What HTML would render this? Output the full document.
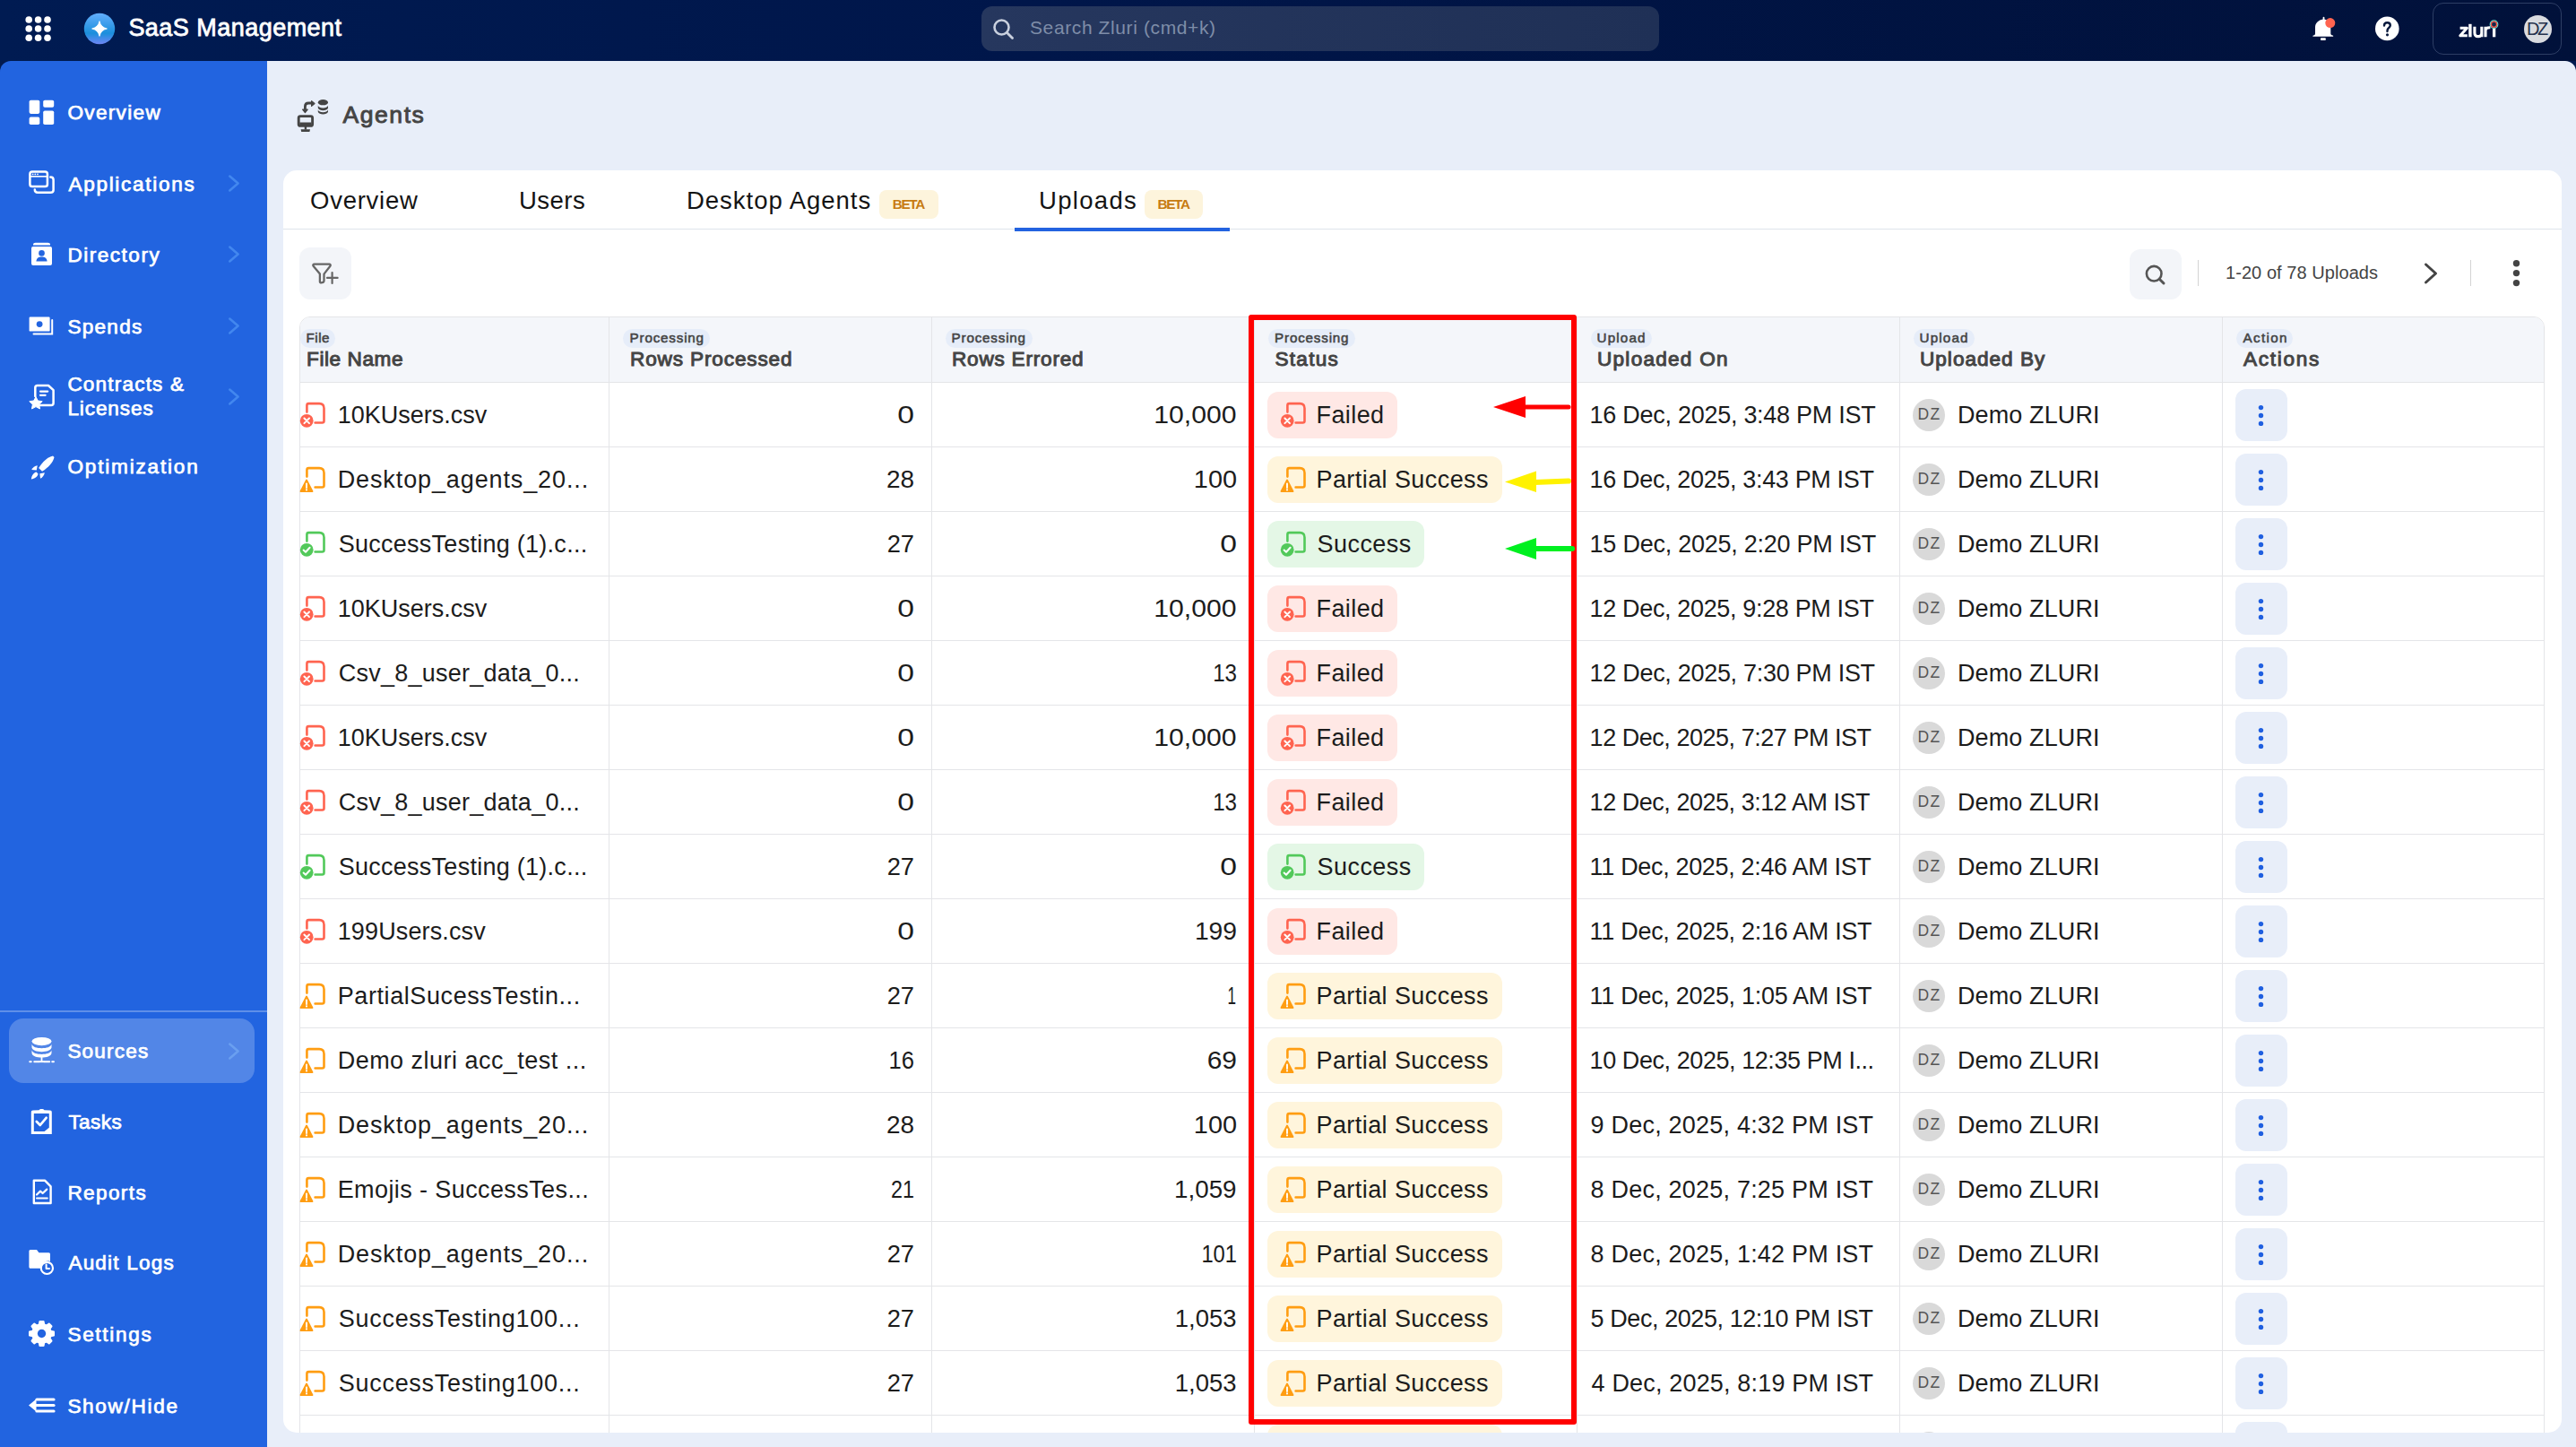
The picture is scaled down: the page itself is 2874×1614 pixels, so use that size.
<!DOCTYPE html><html><head><meta charset="utf-8"><style>
html,body{margin:0;padding:0;}
body{width:2874px;height:1614px;overflow:hidden;position:relative;background:#021a4f;font-family:"Liberation Sans", sans-serif;}
.t{position:absolute;white-space:nowrap;}
.r{position:absolute;}
</style></head><body>
<div class="r" style="left:0px;top:0px;width:2874px;height:68px;background:linear-gradient(90deg,#001b52 0%,#00164a 40%,#01113a 100%);border-radius:0px;"></div>
<svg class="r" style="left:0px;top:0px" width="70" height="68" viewBox="0 0 70 68"><circle cx="32.2" cy="22" r="3.8" fill="#fff"/><circle cx="32.2" cy="32" r="3.8" fill="#fff"/><circle cx="32.2" cy="42.3" r="3.8" fill="#fff"/><circle cx="42.6" cy="22" r="3.8" fill="#fff"/><circle cx="42.6" cy="32" r="3.8" fill="#fff"/><circle cx="42.6" cy="42.3" r="3.8" fill="#fff"/><circle cx="53" cy="22" r="3.8" fill="#fff"/><circle cx="53" cy="32" r="3.8" fill="#fff"/><circle cx="53" cy="42.3" r="3.8" fill="#fff"/></svg>
<svg class="r" style="left:90px;top:11px" width="42" height="42" viewBox="0 0 42 42"><defs><linearGradient id="lg" x1="0" y1="0" x2="0" y2="1"><stop offset="0" stop-color="#63aefc"/><stop offset="0.65" stop-color="#1b8fdc"/><stop offset="1" stop-color="#6d86f5"/></linearGradient></defs><circle cx="21" cy="21" r="17.2" fill="url(#lg)"/><path d="M21 12.6 Q22.5 19.5 29.4 21 Q22.5 22.5 21 29.4 Q19.5 22.5 12.6 21 Q19.5 19.5 21 12.6Z" fill="#fff" stroke="#fff" stroke-width="0.8" stroke-linejoin="round"/></svg>
<div class="t" style="left:143.40px;top:18.12px;font-size:27px;line-height:27px;color:#ffffff;font-weight:400;letter-spacing:0.468px;-webkit-text-stroke:0.8px #fff;">SaaS Management</div>
<div class="r" style="left:1095px;top:7px;width:756px;height:50px;background:linear-gradient(90deg,#26375e,#1f3056);border-radius:12px;"></div>
<svg class="r" style="left:1104px;top:17px" width="32" height="32" viewBox="0 0 32 32"><circle cx="13.5" cy="13.5" r="8" fill="none" stroke="#c9d0de" stroke-width="2.6"/><line x1="19.5" y1="19.5" x2="25.5" y2="25.5" stroke="#c9d0de" stroke-width="2.8" stroke-linecap="round"/></svg>
<div class="t" style="left:1149.00px;top:19.67px;font-size:21px;line-height:21px;color:#7e8da8;font-weight:400;letter-spacing:0.607px;">Search Zluri (cmd+k)</div>
<svg class="r" style="left:2574px;top:14px" width="40" height="36" viewBox="0 0 40 36"><path d="M17.6 5.6 C17.6 4.4 19.4 4.4 19.4 5.6 L19.4 7.4 C23.6 8.2 26.3 11.6 26.3 16.2 L26.3 23.6 C26.3 24.8 27.6 25.4 28.6 25.6 C29.4 25.8 29.6 26.8 28.8 26.8 L6.8 26.8 C6 26.8 6.2 25.8 7 25.6 C8 25.4 9 24.8 9 23.6 L9 16.2 C9 11.6 12.8 8.2 17.6 7.4Z" fill="#fff"/><rect x="15" y="28.2" width="5.8" height="2.8" rx="0.8" fill="#fff"/><circle cx="25.8" cy="11.6" r="5.5" fill="#ff6450"/></svg>
<svg class="r" style="left:2648px;top:17px" width="32" height="32" viewBox="0 0 32 32"><circle cx="15.3" cy="14.9" r="13.3" fill="#fff"/><path d="M12 11.6 C12 9.4 13.5 8.2 15.4 8.2 C17.4 8.2 18.8 9.5 18.8 11.3 C18.8 13.4 16.2 14 15.6 16.4 L15.5 18" fill="none" stroke="#0a1a3e" stroke-width="2.4" stroke-linecap="round"/><circle cx="15.5" cy="21.8" r="1.6" fill="#0a1a3e"/></svg>
<div class="r" style="left:2714px;top:3px;width:144px;height:58px;background:transparent;border-radius:12px;box-sizing:border-box;border:1.3px solid rgba(160,175,210,0.28);"></div>
<svg class="r" style="left:2740px;top:20px" width="50" height="26" viewBox="0 0 50 26"><path d="M4.6 11.2 L12.4 11.2 L4.8 19.8 L12.8 19.8" fill="none" stroke="#fff" stroke-width="3" stroke-linejoin="round"/><line x1="15.9" y1="6.8" x2="15.9" y2="21.3" stroke="#fff" stroke-width="3.4"/><path d="M20.9 9.7 L20.9 16.4 C20.9 19.4 22.4 20.6 24.8 20.6 C27.2 20.6 28.8 19.4 28.8 16.4 L28.8 9.7 M28.8 15.8 L28.8 21.3" fill="none" stroke="#fff" stroke-width="3.1"/><path d="M33 21.3 L33 9.7 M33 14.6 C33 11.8 34.8 10.6 38.4 10.8" fill="none" stroke="#fff" stroke-width="3.1"/><line x1="42.6" y1="11.4" x2="42.6" y2="21.3" stroke="#fff" stroke-width="3.3"/><circle cx="42.5" cy="7.2" r="4.3" fill="none" stroke="#5fe0d0" stroke-width="1.2"/><circle cx="42.5" cy="7.2" r="3.1" fill="#14294d" stroke="#ff5a4a" stroke-width="1.3"/></svg>
<div class="r" style="left:2816px;top:16.5px;width:31px;height:31px;border-radius:50%;background:#d9dbe0;"></div>
<div class="t" style="left:2819.00px;top:21.83px;font-size:20px;line-height:20px;color:#26324d;font-weight:400;letter-spacing:-2.443px;">DZ</div>
<div class="r" style="left:0px;top:68px;width:298px;height:1546px;background:#2264e0;border-radius:0px;border-top-left-radius:12px;"></div>
<div class="r" style="left:298px;top:68px;width:2576px;height:1546px;background:#e8eef9;border-radius:0px;border-top-right-radius:12px;"></div>
<svg class="r" style="left:31px;top:110.5px" width="32" height="32" viewBox="0 0 32 32"><rect x="1.6" y="0.7" width="11.7" height="15.2" rx="1.8" fill="#fff"/><rect x="17.2" y="0.7" width="12" height="8" rx="1.8" fill="#fff"/><rect x="1.6" y="19.6" width="11.7" height="8.4" rx="1.8" fill="#fff"/><rect x="17.2" y="12.5" width="12" height="15.5" rx="1.8" fill="#fff"/></svg>
<div class="t" style="left:75.40px;top:114.61px;font-size:22.6px;line-height:22.6px;color:#ffffff;font-weight:400;letter-spacing:1.308px;-webkit-text-stroke:0.75px #fff;">Overview</div>
<svg class="r" style="left:31px;top:190px" width="32" height="32" viewBox="0 0 32 32"><rect x="2.4" y="1.6" width="19.5" height="16.5" rx="2.6" fill="none" stroke="#fff" stroke-width="2.5"/><line x1="2.4" y1="6.8" x2="21.9" y2="6.8" stroke="#fff" stroke-width="1.6"/><circle cx="5.6" cy="4.3" r="0.9" fill="#fff"/><circle cx="8.3" cy="4.3" r="0.9" fill="#fff"/><circle cx="11" cy="4.3" r="0.9" fill="#fff"/><path d="M25.3 7.6 C27.5 7.6 28.6 8.8 28.6 10.6 L28.6 22 C28.6 24 27.4 24.8 25.4 24.8 L11 24.8 C9 24.8 7.8 23.8 7.8 21.6" fill="none" stroke="#fff" stroke-width="2.5" stroke-linecap="round"/></svg>
<div class="t" style="left:76.40px;top:194.61px;font-size:22.6px;line-height:22.6px;color:#ffffff;font-weight:400;letter-spacing:1.679px;-webkit-text-stroke:0.75px #fff;">Applications</div>
<svg class="r" style="left:253px;top:192px" width="16" height="24" viewBox="0 0 16 24"><path d="M3.3 4.6 L12.6 12.6 L3.3 20.4" fill="none" stroke="#4287ef" stroke-width="2.6" stroke-linecap="round" stroke-linejoin="round"/></svg>
<svg class="r" style="left:31px;top:269px" width="32" height="32" viewBox="0 0 32 32"><path d="M6 4.2 C6 2.6 7 1.8 8.6 1.8 L22.5 1.8 C24.2 1.8 25 2.6 25 4 L25 4.6 L6 4.6Z" fill="#fff"/><rect x="4" y="6" width="23" height="21" rx="2" fill="#fff"/><circle cx="15.5" cy="13.4" r="3.3" fill="#2264e0"/><path d="M9.4 22.5 C9.8 18.8 12.3 17.6 15.5 17.6 C18.7 17.6 21.2 18.8 21.6 22.5Z" fill="#2264e0"/></svg>
<div class="t" style="left:75.40px;top:273.61px;font-size:22.6px;line-height:22.6px;color:#ffffff;font-weight:400;letter-spacing:1.489px;-webkit-text-stroke:0.75px #fff;">Directory</div>
<svg class="r" style="left:253px;top:271px" width="16" height="24" viewBox="0 0 16 24"><path d="M3.3 4.6 L12.6 12.6 L3.3 20.4" fill="none" stroke="#4287ef" stroke-width="2.6" stroke-linecap="round" stroke-linejoin="round"/></svg>
<svg class="r" style="left:31px;top:352px" width="32" height="32" viewBox="0 0 32 32"><rect x="1.6" y="1.6" width="23" height="16" rx="1.2" fill="#fff"/><circle cx="13.1" cy="9.6" r="3.4" fill="#2264e0"/><path d="M27.2 5 L27.2 20.4 L6.5 20.4" fill="none" stroke="#fff" stroke-width="2" stroke-linecap="round"/></svg>
<div class="t" style="left:75.40px;top:353.61px;font-size:22.6px;line-height:22.6px;color:#ffffff;font-weight:400;letter-spacing:1.254px;-webkit-text-stroke:0.75px #fff;">Spends</div>
<svg class="r" style="left:253px;top:351px" width="16" height="24" viewBox="0 0 16 24"><path d="M3.3 4.6 L12.6 12.6 L3.3 20.4" fill="none" stroke="#4287ef" stroke-width="2.6" stroke-linecap="round" stroke-linejoin="round"/></svg>
<svg class="r" style="left:31px;top:506px" width="32" height="32" viewBox="0 0 32 32"><path d="M28 2.5 C22 4 16.5 9 12.2 16 L16 19.8 C23 15.5 28 10 29.5 4Z" fill="#fff"/><path d="M10.8 13.2 C8 13.5 5.5 15.5 4.2 18 L9.8 18.6Z" fill="#fff"/><path d="M18.8 21.2 C18.5 24 16.5 26.5 14 27.8 L13.4 22.2Z" fill="#fff"/><path d="M9.6 20.5 C6.5 21 4.4 24.5 3.8 28.4 C7.6 27.8 11 25.6 11.5 22.4Z" fill="#fff"/></svg>
<div class="t" style="left:75.40px;top:509.61px;font-size:22.6px;line-height:22.6px;color:#ffffff;font-weight:400;letter-spacing:1.800px;-webkit-text-stroke:0.75px #fff;">Optimization</div>
<svg class="r" style="left:31px;top:428px" width="32" height="32" viewBox="0 0 32 32"><path d="M8.3 14 L8.3 4.5 C8.3 3 9.2 2 10.8 2 L23 2 L28.6 7.2 L28.6 21.5 C28.6 23 27.6 24 26.2 24 L13 24" fill="none" stroke="#fff" stroke-width="2.5" stroke-linejoin="round" stroke-linecap="round"/><line x1="14" y1="8.6" x2="22.2" y2="8.6" stroke="#fff" stroke-width="2.2" stroke-linecap="round"/><line x1="14" y1="12.8" x2="19.6" y2="12.8" stroke="#fff" stroke-width="2.2" stroke-linecap="round"/><path d="M9 14.6 L11.3 19 L16.2 19.7 L12.6 23.1 L13.5 28 L9 25.6 L4.5 28 L5.4 23.1 L1.8 19.7 L6.7 19Z" fill="#fff" stroke="#fff" stroke-width="1" stroke-linejoin="round"/></svg>
<div class="t" style="left:75.40px;top:418.01px;font-size:22.6px;line-height:22.6px;color:#ffffff;font-weight:400;letter-spacing:1.164px;-webkit-text-stroke:0.75px #fff;">Contracts &amp;</div>
<div class="t" style="left:75.40px;top:444.81px;font-size:22.6px;line-height:22.6px;color:#ffffff;font-weight:400;letter-spacing:0.875px;-webkit-text-stroke:0.75px #fff;">Licenses</div>
<svg class="r" style="left:253px;top:430px" width="16" height="24" viewBox="0 0 16 24"><path d="M3.3 4.6 L12.6 12.6 L3.3 20.4" fill="none" stroke="#4287ef" stroke-width="2.6" stroke-linecap="round" stroke-linejoin="round"/></svg>
<div class="r" style="left:0px;top:1127px;width:298px;height:1.5px;background:rgba(255,255,255,0.28);border-radius:0px;"></div>
<div class="r" style="left:10px;top:1136px;width:274px;height:72px;background:rgba(255,255,255,0.22);border-radius:16px;"></div>
<svg class="r" style="left:31px;top:1156px" width="32" height="32" viewBox="0 0 32 32"><ellipse cx="15.5" cy="5.6" rx="11" ry="4.6" fill="#fff"/><path d="M4.5 8.8 C5.5 12 10 13.2 15.5 13.2 C21 13.2 25.5 12 26.5 8.8 L26.5 12.6 C25.8 15.8 21 17.2 15.5 17.2 C10 17.2 5.2 15.8 4.5 12.6Z" fill="#fff"/><path d="M4.5 15.6 C5.5 18.8 10 20 15.5 20 C21 20 25.5 18.8 26.5 15.6 L26.5 18.8 C25.8 22.2 21 23.6 15.5 23.6 C10 23.6 5.2 22.2 4.5 18.8Z" fill="#fff"/><line x1="15.5" y1="23" x2="15.5" y2="28" stroke="#fff" stroke-width="1.8"/><path d="M2.2 28.2 L3.8 28.2 M7.2 28.2 L12.6 28.2 M18.4 28.2 L24.2 28.2 M27.2 28.2 L29 28.2" stroke="#fff" stroke-width="1.9" stroke-linecap="round"/><line x1="12.6" y1="28.2" x2="18.4" y2="28.2" stroke="#fff" stroke-width="1.9"/></svg>
<div class="t" style="left:75.40px;top:1161.61px;font-size:22.6px;line-height:22.6px;color:#ffffff;font-weight:400;letter-spacing:1.152px;-webkit-text-stroke:0.75px #fff;">Sources</div>
<svg class="r" style="left:31px;top:1236px" width="32" height="32" viewBox="0 0 32 32"><path d="M12.6 2.2 C13 0.6 18 0.6 18.4 2.2 L24.8 2.6 C26.2 2.6 26.8 3.4 26.8 4.8 L26.8 29 L3.8 29 L3.8 4.8 C3.8 3.4 4.4 2.6 5.8 2.6Z" fill="#fff"/><path d="M6.8 6 L23.8 6 L23.8 21.8 L18.6 26 L6.8 26Z" fill="#2264e0"/><path d="M9.8 15 L13.8 19 L20.6 10.8" fill="none" stroke="#fff" stroke-width="2.7" stroke-linecap="round" stroke-linejoin="round"/></svg>
<div class="t" style="left:76.40px;top:1240.61px;font-size:22.6px;line-height:22.6px;color:#ffffff;font-weight:400;letter-spacing:0.386px;-webkit-text-stroke:0.75px #fff;">Tasks</div>
<svg class="r" style="left:31px;top:1315px" width="32" height="32" viewBox="0 0 32 32"><path d="M6.8 1.8 L19.2 1.8 L25.6 8.4 L25.6 27 L6.8 27Z" fill="none" stroke="#fff" stroke-width="2.4" stroke-linejoin="round"/><path d="M10 17.5 L14 13.6 L16.6 16 L21.2 11.6" fill="none" stroke="#fff" stroke-width="2.2" stroke-linecap="round" stroke-linejoin="round"/><line x1="10" y1="21.6" x2="21.8" y2="21.6" stroke="#fff" stroke-width="2" stroke-linecap="round"/></svg>
<div class="t" style="left:75.40px;top:1319.61px;font-size:22.6px;line-height:22.6px;color:#ffffff;font-weight:400;letter-spacing:1.364px;-webkit-text-stroke:0.75px #fff;">Reports</div>
<svg class="r" style="left:31px;top:1393px" width="32" height="32" viewBox="0 0 32 32"><path d="M1.4 2.8 C1.4 1.8 2 1 3 1 L10 1 L12.4 4.3 L23.4 4.3 C24.4 4.3 25 5 25 6 L25 14 C20 12.5 15.5 15.5 15.3 21.8 L3 21.8 C2 21.8 1.4 21 1.4 20Z" fill="#fff"/><circle cx="21.4" cy="21.4" r="6.6" fill="none" stroke="#fff" stroke-width="2.2"/><path d="M20.6 17.6 L20.6 22 L24 22" fill="none" stroke="#fff" stroke-width="2" stroke-linecap="round" stroke-linejoin="round"/></svg>
<div class="t" style="left:76.40px;top:1397.61px;font-size:22.6px;line-height:22.6px;color:#ffffff;font-weight:400;letter-spacing:1.170px;-webkit-text-stroke:0.75px #fff;">Audit Logs</div>
<svg class="r" style="left:31px;top:1472px" width="32" height="32" viewBox="0 0 32 32"><g transform="translate(15.5 15.5) scale(0.93) translate(-15.5 -15.5)"><path d="M13.3 1 L17.7 1 L18.4 4.6 L21.3 5.8 L24.3 3.7 L27.3 6.7 L25.2 9.7 L26.4 12.6 L30 13.3 L30 17.7 L26.4 18.4 L25.2 21.3 L27.3 24.3 L24.3 27.3 L21.3 25.2 L18.4 26.4 L17.7 30 L13.3 30 L12.6 26.4 L9.7 25.2 L6.7 27.3 L3.7 24.3 L5.8 21.3 L4.6 18.4 L1 17.7 L1 13.3 L4.6 12.6 L5.8 9.7 L3.7 6.7 L6.7 3.7 L9.7 5.8 L12.6 4.6Z" fill="#fff" stroke="#fff" stroke-width="2.2" stroke-linejoin="round"/><circle cx="15.5" cy="15.5" r="5" fill="#2264e0"/></g></svg>
<div class="t" style="left:75.40px;top:1477.61px;font-size:22.6px;line-height:22.6px;color:#ffffff;font-weight:400;letter-spacing:1.666px;-webkit-text-stroke:0.75px #fff;">Settings</div>
<svg class="r" style="left:31px;top:1552px" width="32" height="32" viewBox="0 0 32 32"><path d="M1 15.5 L9.5 8.5 L9.5 22.5Z" fill="#fff"/><line x1="10" y1="9" x2="29" y2="9" stroke="#fff" stroke-width="3.2" stroke-linecap="round"/><line x1="8" y1="15.5" x2="29" y2="15.5" stroke="#fff" stroke-width="3.2" stroke-linecap="round"/><line x1="10" y1="22" x2="29" y2="22" stroke="#fff" stroke-width="3.2" stroke-linecap="round"/></svg>
<div class="t" style="left:75.40px;top:1557.61px;font-size:22.6px;line-height:22.6px;color:#ffffff;font-weight:400;letter-spacing:1.663px;-webkit-text-stroke:0.75px #fff;">Show/Hide</div>
<svg class="r" style="left:253px;top:1160px" width="16" height="24" viewBox="0 0 16 24"><path d="M3.3 4.6 L12.6 12.6 L3.3 20.4" fill="none" stroke="#6a9ff0" stroke-width="2.6" stroke-linecap="round" stroke-linejoin="round"/></svg>
<svg class="r" style="left:320px;top:100px" width="60" height="60" viewBox="0 0 60 60"><rect x="13.2" y="29.6" width="15.4" height="10.8" rx="2" fill="none" stroke="#444" stroke-width="2.9"/><path d="M14.3 38 L27.5 38" stroke="#444" stroke-width="3"/><line x1="20.9" y1="41" x2="20.9" y2="44.6" stroke="#444" stroke-width="2.4"/><path d="M15.6 44.2 L26 44.2 L25.4 46.9 L16.2 46.9Z" fill="#444"/><ellipse cx="40.4" cy="14.2" rx="5.6" ry="3.1" fill="#444"/><path d="M34.8 17.8 C35.5 19.6 37.8 20.4 40.4 20.4 C43 20.4 45.3 19.6 46 17.8 L46 20.4 C45.3 22.2 43 23.2 40.4 23.2 C37.8 23.2 35.5 22.2 34.8 20.4Z" fill="#444"/><path d="M34.8 22.6 C35.5 24.4 37.8 25.2 40.4 25.2 C43 25.2 45.3 24.4 46 22.6 L46 24.8 C45.3 26.6 43 27.6 40.4 27.6 C37.8 27.6 35.5 26.6 34.8 24.8Z" fill="#444"/><path d="M20.4 22.5 L20.4 18.8 C20.4 16.4 22 15 24.2 15 L28.6 15" fill="none" stroke="#444" stroke-width="2.8"/><path d="M27.6 12.6 L31 15.5 L27.6 18.4Z" fill="#444" stroke="#444" stroke-width="1.2" stroke-linejoin="round"/><path d="M17.6 22.2 L23.2 22.2 L20.4 25.6Z" fill="#444" stroke="#444" stroke-width="1.2" stroke-linejoin="round"/></svg>
<div class="t" style="left:382.40px;top:114.98px;font-size:26.6px;line-height:26.6px;color:#444444;font-weight:400;letter-spacing:1.541px;-webkit-text-stroke:0.9px #444;">Agents</div>
<div class="r" style="left:316px;top:190px;width:2542px;height:1408px;background:#ffffff;border-radius:15px;"></div>
<div class="t" style="left:346.00px;top:209.64px;font-size:27.5px;line-height:27.5px;color:#141414;font-weight:400;letter-spacing:0.751px;">Overview</div>
<div class="t" style="left:579.00px;top:209.64px;font-size:27.5px;line-height:27.5px;color:#141414;font-weight:400;letter-spacing:0.485px;">Users</div>
<div class="t" style="left:766.00px;top:209.64px;font-size:27.5px;line-height:27.5px;color:#141414;font-weight:400;letter-spacing:0.970px;">Desktop Agents</div>
<div class="r" style="left:981px;top:212px;width:66px;height:32px;background:#fdf4dc;border-radius:8px;"></div>
<div class="t" style="left:995.70px;top:219.97px;font-size:15.3px;line-height:15.3px;color:#c77b12;font-weight:700;letter-spacing:-1.319px;">BETA</div>
<div class="t" style="left:1159.00px;top:209.64px;font-size:27.5px;line-height:27.5px;color:#141414;font-weight:400;letter-spacing:1.309px;">Uploads</div>
<div class="r" style="left:1277px;top:212px;width:65px;height:32px;background:#fdf4dc;border-radius:8px;"></div>
<div class="t" style="left:1291.50px;top:219.97px;font-size:15.3px;line-height:15.3px;color:#c77b12;font-weight:700;letter-spacing:-1.319px;">BETA</div>
<div class="r" style="left:316px;top:255px;width:2542px;height:1px;background:#dfe4eb;border-radius:0px;"></div>
<div class="r" style="left:1132px;top:254px;width:240px;height:4px;background:#2363e0;border-radius:0px;"></div>
<div class="r" style="left:334px;top:276px;width:58px;height:58px;background:#f3f5f9;border-radius:12px;"></div>
<svg class="r" style="left:334px;top:276px" width="58" height="58" viewBox="0 0 58 58"><path d="M16.8 18.6 L33.2 18.6 C34.6 18.6 35.2 19.7 34.4 20.7 L27.5 29.6 L27.5 37 C27.5 38.4 26.6 39 25.4 39.2 L24.4 39.4 C23.6 39.6 22.9 39 22.9 38.2 L22.9 29.6 L15.6 20.7 C14.8 19.7 15.4 18.6 16.8 18.6Z" fill="none" stroke="#666" stroke-width="2.3" stroke-linejoin="round"/><line x1="36.6" y1="28" x2="36.6" y2="40" stroke="#666" stroke-width="2.2" stroke-linecap="round"/><line x1="31" y1="33.9" x2="42.6" y2="33.9" stroke="#666" stroke-width="2.2" stroke-linecap="round"/></svg>
<div class="r" style="left:2376px;top:278px;width:58px;height:56px;background:#f3f5f9;border-radius:12px;"></div>
<svg class="r" style="left:2376px;top:278px" width="58" height="56" viewBox="0 0 58 56"><circle cx="27.2" cy="27.2" r="8.3" fill="none" stroke="#555" stroke-width="2.6"/><line x1="33.2" y1="33.2" x2="38" y2="38" stroke="#555" stroke-width="3" stroke-linecap="round"/></svg>
<div class="r" style="left:2452px;top:290px;width:1.3px;height:29px;background:#d3d3d3;border-radius:0px;"></div>
<div class="t" style="left:2483.00px;top:294.33px;font-size:20px;line-height:20px;color:#444444;font-weight:400;letter-spacing:0.059px;">1-20 of 78 Uploads</div>
<svg class="r" style="left:2700px;top:290px" width="26" height="30" viewBox="0 0 26 30"><path d="M6.5 5 L17.5 15 L6.5 25" fill="none" stroke="#444" stroke-width="3" stroke-linecap="round" stroke-linejoin="round"/></svg>
<div class="r" style="left:2756px;top:290px;width:1.3px;height:29px;background:#d3d3d3;border-radius:0px;"></div>
<svg class="r" style="left:2798px;top:286px" width="20" height="38" viewBox="0 0 20 38"><circle cx="9.5" cy="7.8" r="3.7" fill="#444"/><circle cx="9.5" cy="18.6" r="3.7" fill="#444"/><circle cx="9.5" cy="29.6" r="3.7" fill="#444"/></svg>
<div class="r" style="left:334px;top:353px;width:2505px;height:1245px;overflow:hidden;">
<div class="r" style="left:0;top:0;width:2505px;height:1400px;box-sizing:border-box;border:1px solid #e4e5e8;border-radius:12px;background:#fff;"></div>
<div class="r" style="left:1px;top:1px;width:2503px;height:72px;background:#f4f6fa;border-radius:11px 11px 0 0;"></div>
<div class="r" style="left:345px;top:0;width:1px;height:1400px;background:#e4e5e8;"></div>
<div class="r" style="left:705px;top:0;width:1px;height:1400px;background:#e4e5e8;"></div>
<div class="r" style="left:1065px;top:0;width:1px;height:1400px;background:#e4e5e8;"></div>
<div class="r" style="left:1425px;top:0;width:1px;height:1400px;background:#e4e5e8;"></div>
<div class="r" style="left:1785px;top:0;width:1px;height:1400px;background:#e4e5e8;"></div>
<div class="r" style="left:2145px;top:0;width:1px;height:1400px;background:#e4e5e8;"></div>
<div class="r" style="left:0;top:73px;width:2505px;height:1px;background:#e4e5e8;"></div>
<div class="r" style="left:0;top:145px;width:2505px;height:1px;background:#e4e5e8;"></div>
<div class="r" style="left:0;top:217px;width:2505px;height:1px;background:#e4e5e8;"></div>
<div class="r" style="left:0;top:289px;width:2505px;height:1px;background:#e4e5e8;"></div>
<div class="r" style="left:0;top:361px;width:2505px;height:1px;background:#e4e5e8;"></div>
<div class="r" style="left:0;top:433px;width:2505px;height:1px;background:#e4e5e8;"></div>
<div class="r" style="left:0;top:505px;width:2505px;height:1px;background:#e4e5e8;"></div>
<div class="r" style="left:0;top:577px;width:2505px;height:1px;background:#e4e5e8;"></div>
<div class="r" style="left:0;top:649px;width:2505px;height:1px;background:#e4e5e8;"></div>
<div class="r" style="left:0;top:721px;width:2505px;height:1px;background:#e4e5e8;"></div>
<div class="r" style="left:0;top:793px;width:2505px;height:1px;background:#e4e5e8;"></div>
<div class="r" style="left:0;top:865px;width:2505px;height:1px;background:#e4e5e8;"></div>
<div class="r" style="left:0;top:937px;width:2505px;height:1px;background:#e4e5e8;"></div>
<div class="r" style="left:0;top:1009px;width:2505px;height:1px;background:#e4e5e8;"></div>
<div class="r" style="left:0;top:1081px;width:2505px;height:1px;background:#e4e5e8;"></div>
<div class="r" style="left:0;top:1153px;width:2505px;height:1px;background:#e4e5e8;"></div>
<div class="r" style="left:0;top:1225px;width:2505px;height:1px;background:#e4e5e8;"></div>
<div class="r" style="left:0;top:1297px;width:2505px;height:1px;background:#e4e5e8;"></div>
</div>
<div class="r" style="left:335px;top:367px;width:38.5px;height:21px;background:#e6edf9;border-radius:10.5px;"></div>
<div class="t" style="left:341.60px;top:368.69px;font-size:15.2px;line-height:15.2px;color:#444444;font-weight:400;letter-spacing:0.492px;-webkit-text-stroke:0.55px #444;">File</div>
<div class="t" style="left:342.00px;top:390.01px;font-size:22.6px;line-height:22.6px;color:#444444;font-weight:400;letter-spacing:0.577px;-webkit-text-stroke:1px #444;">File Name</div>
<div class="r" style="left:695px;top:367px;width:97px;height:21px;background:#e6edf9;border-radius:10.5px;"></div>
<div class="t" style="left:702.60px;top:368.69px;font-size:15.2px;line-height:15.2px;color:#444444;font-weight:400;letter-spacing:0.813px;-webkit-text-stroke:0.55px #444;">Processing</div>
<div class="t" style="left:703.00px;top:390.01px;font-size:22.6px;line-height:22.6px;color:#444444;font-weight:400;letter-spacing:0.850px;-webkit-text-stroke:1px #444;">Rows Processed</div>
<div class="r" style="left:1055px;top:367px;width:97px;height:21px;background:#e6edf9;border-radius:10.5px;"></div>
<div class="t" style="left:1061.60px;top:368.69px;font-size:15.2px;line-height:15.2px;color:#444444;font-weight:400;letter-spacing:0.813px;-webkit-text-stroke:0.55px #444;">Processing</div>
<div class="t" style="left:1062.00px;top:390.01px;font-size:22.6px;line-height:22.6px;color:#444444;font-weight:400;letter-spacing:0.769px;-webkit-text-stroke:1px #444;">Rows Errored</div>
<div class="r" style="left:1415px;top:367px;width:97px;height:21px;background:#e6edf9;border-radius:10.5px;"></div>
<div class="t" style="left:1422.10px;top:368.69px;font-size:15.2px;line-height:15.2px;color:#444444;font-weight:400;letter-spacing:0.813px;-webkit-text-stroke:0.55px #444;">Processing</div>
<div class="t" style="left:1422.50px;top:390.01px;font-size:22.6px;line-height:22.6px;color:#444444;font-weight:400;letter-spacing:1.249px;-webkit-text-stroke:1px #444;">Status</div>
<div class="r" style="left:1775px;top:367px;width:68px;height:21px;background:#e6edf9;border-radius:10.5px;"></div>
<div class="t" style="left:1781.60px;top:368.69px;font-size:15.2px;line-height:15.2px;color:#444444;font-weight:400;letter-spacing:1.164px;-webkit-text-stroke:0.55px #444;">Upload</div>
<div class="t" style="left:1782.00px;top:390.01px;font-size:22.6px;line-height:22.6px;color:#444444;font-weight:400;letter-spacing:1.242px;-webkit-text-stroke:1px #444;">Uploaded On</div>
<div class="r" style="left:2135px;top:367px;width:68px;height:21px;background:#e6edf9;border-radius:10.5px;"></div>
<div class="t" style="left:2141.60px;top:368.69px;font-size:15.2px;line-height:15.2px;color:#444444;font-weight:400;letter-spacing:1.164px;-webkit-text-stroke:0.55px #444;">Upload</div>
<div class="t" style="left:2142.00px;top:390.01px;font-size:22.6px;line-height:22.6px;color:#444444;font-weight:400;letter-spacing:0.992px;-webkit-text-stroke:1px #444;">Uploaded By</div>
<div class="r" style="left:2495px;top:367px;width:63px;height:21px;background:#e6edf9;border-radius:10.5px;"></div>
<div class="t" style="left:2502.60px;top:368.69px;font-size:15.2px;line-height:15.2px;color:#444444;font-weight:400;letter-spacing:1.347px;-webkit-text-stroke:0.55px #444;">Action</div>
<div class="t" style="left:2503.00px;top:390.01px;font-size:22.6px;line-height:22.6px;color:#444444;font-weight:400;letter-spacing:1.701px;-webkit-text-stroke:1px #444;">Actions</div>
<div class="r" style="left:0;top:0;width:2874px;height:1598px;overflow:hidden;">
<svg class="r" style="left:330px;top:440px" width="40" height="45" viewBox="0 0 40 45"><path d="M12.4 19.6 L12.4 12.2 C12.4 10.9 13.1 10.1 14.4 10.1 L26.2 10.1 Q31.5 10.1 31.5 15.4 L31.5 29.5 C31.5 30.8 30.8 31.5 29.5 31.5 L21.6 31.5" fill="none" stroke="#ff6450" stroke-width="2.6" stroke-linecap="round" stroke-linejoin="round"/><circle cx="12.2" cy="29.3" r="7.4" fill="#ff6450"/><path d="M9.4 26.5 L15 32.1 M15 26.5 L9.4 32.1" stroke="#fff" stroke-width="2" stroke-linecap="round"/></svg>
<div class="t" style="left:376.70px;top:449.92px;font-size:27px;line-height:27px;color:#1c1c1c;font-weight:400;letter-spacing:-0.004px;">10KUsers.csv</div>
<div class="t" style="right:1853.53px;top:449.92px;font-size:27px;line-height:27px;color:#1c1c1c;font-weight:400;letter-spacing:0.000px;transform:scaleX(1.2462);transform-origin:100% 0;">0</div>
<div class="t" style="right:1494.16px;top:449.92px;font-size:27px;line-height:27px;color:#1c1c1c;font-weight:400;letter-spacing:0.000px;transform:scaleX(1.1186);transform-origin:100% 0;">10,000</div>
<div class="t" style="left:1773.60px;top:449.92px;font-size:27px;line-height:27px;color:#1c1c1c;font-weight:400;letter-spacing:-0.274px;">16 Dec, 2025, 3:48 PM IST</div>
<div class="r" style="left:1414px;top:437px;width:145px;height:52px;background:#ffe8e5;border-radius:12px;"></div>
<svg class="r" style="left:1424px;top:440px" width="40" height="45" viewBox="0 0 40 45"><path d="M12.4 19.6 L12.4 12.2 C12.4 10.9 13.1 10.1 14.4 10.1 L26.2 10.1 Q31.5 10.1 31.5 15.4 L31.5 29.5 C31.5 30.8 30.8 31.5 29.5 31.5 L21.6 31.5" fill="none" stroke="#ff6450" stroke-width="2.6" stroke-linecap="round" stroke-linejoin="round"/><circle cx="12.2" cy="29.3" r="7.4" fill="#ff6450"/><path d="M9.4 26.5 L15 32.1 M15 26.5 L9.4 32.1" stroke="#fff" stroke-width="2" stroke-linecap="round"/></svg>
<div class="t" style="left:1468.50px;top:449.92px;font-size:27px;line-height:27px;color:#1c1c1c;font-weight:400;letter-spacing:0.416px;">Failed</div>
<div class="r" style="left:2134px;top:445px;width:36px;height:36px;border-radius:50%;background:#d9d9d9;"></div>
<div class="t" style="left:2139.60px;top:454.22px;font-size:17.5px;line-height:17.5px;color:#555555;font-weight:400;letter-spacing:1.362px;">DZ</div>
<div class="t" style="left:2184.00px;top:449.92px;font-size:27px;line-height:27px;color:#1c1c1c;font-weight:400;letter-spacing:0.108px;">Demo ZLURI</div>
<div class="r" style="left:2494px;top:434px;width:58px;height:58px;background:#e8eef9;border-radius:12px;"></div>
<svg class="r" style="left:2512px;top:446px" width="22" height="34" viewBox="0 0 22 34"><circle cx="10.5" cy="8.6" r="2.7" fill="#1f5fe0"/><circle cx="10.5" cy="17.5" r="2.7" fill="#1f5fe0"/><circle cx="10.5" cy="26.4" r="2.7" fill="#1f5fe0"/></svg>
<svg class="r" style="left:330px;top:512px" width="40" height="45" viewBox="0 0 40 45"><path d="M12.4 19.6 L12.4 12.2 C12.4 10.9 13.1 10.1 14.4 10.1 L26.2 10.1 Q31.5 10.1 31.5 15.4 L31.5 29.5 C31.5 30.8 30.8 31.5 29.5 31.5 L21.6 31.5" fill="none" stroke="#ff9d12" stroke-width="2.6" stroke-linecap="round" stroke-linejoin="round"/><path d="M12 22.4 C12.3 22.4 12.6 22.6 12.8 23 L19.4 35.8 C19.6 36.4 19.3 36.9 18.7 36.9 L5.3 36.9 C4.7 36.9 4.4 36.4 4.6 35.8 L11.2 23 C11.4 22.6 11.7 22.4 12 22.4Z" fill="#ff9d12"/><line x1="12" y1="27.4" x2="12" y2="32" stroke="#fff" stroke-width="1.9" stroke-linecap="round"/><circle cx="12" cy="34.4" r="1.05" fill="#fff"/></svg>
<div class="t" style="left:376.70px;top:521.92px;font-size:27px;line-height:27px;color:#1c1c1c;font-weight:400;letter-spacing:0.885px;">Desktop_agents_20...</div>
<div class="t" style="right:1853.75px;top:521.92px;font-size:27px;line-height:27px;color:#1c1c1c;font-weight:400;letter-spacing:0.000px;transform:scaleX(1.0351);transform-origin:100% 0;">28</div>
<div class="t" style="right:1494.21px;top:521.92px;font-size:27px;line-height:27px;color:#1c1c1c;font-weight:400;letter-spacing:0.000px;transform:scaleX(1.0706);transform-origin:100% 0;">100</div>
<div class="t" style="left:1773.60px;top:521.92px;font-size:27px;line-height:27px;color:#1c1c1c;font-weight:400;letter-spacing:-0.349px;">16 Dec, 2025, 3:43 PM IST</div>
<div class="r" style="left:1414px;top:509px;width:262px;height:52px;background:#fff5dc;border-radius:12px;"></div>
<svg class="r" style="left:1424px;top:512px" width="40" height="45" viewBox="0 0 40 45"><path d="M12.4 19.6 L12.4 12.2 C12.4 10.9 13.1 10.1 14.4 10.1 L26.2 10.1 Q31.5 10.1 31.5 15.4 L31.5 29.5 C31.5 30.8 30.8 31.5 29.5 31.5 L21.6 31.5" fill="none" stroke="#ff9d12" stroke-width="2.6" stroke-linecap="round" stroke-linejoin="round"/><path d="M12 22.4 C12.3 22.4 12.6 22.6 12.8 23 L19.4 35.8 C19.6 36.4 19.3 36.9 18.7 36.9 L5.3 36.9 C4.7 36.9 4.4 36.4 4.6 35.8 L11.2 23 C11.4 22.6 11.7 22.4 12 22.4Z" fill="#ff9d12"/><line x1="12" y1="27.4" x2="12" y2="32" stroke="#fff" stroke-width="1.9" stroke-linecap="round"/><circle cx="12" cy="34.4" r="1.05" fill="#fff"/></svg>
<div class="t" style="left:1468.50px;top:521.92px;font-size:27px;line-height:27px;color:#1c1c1c;font-weight:400;letter-spacing:0.423px;">Partial Success</div>
<div class="r" style="left:2134px;top:517px;width:36px;height:36px;border-radius:50%;background:#d9d9d9;"></div>
<div class="t" style="left:2139.60px;top:526.22px;font-size:17.5px;line-height:17.5px;color:#555555;font-weight:400;letter-spacing:1.362px;">DZ</div>
<div class="t" style="left:2184.00px;top:521.92px;font-size:27px;line-height:27px;color:#1c1c1c;font-weight:400;letter-spacing:0.108px;">Demo ZLURI</div>
<div class="r" style="left:2494px;top:506px;width:58px;height:58px;background:#e8eef9;border-radius:12px;"></div>
<svg class="r" style="left:2512px;top:518px" width="22" height="34" viewBox="0 0 22 34"><circle cx="10.5" cy="8.6" r="2.7" fill="#1f5fe0"/><circle cx="10.5" cy="17.5" r="2.7" fill="#1f5fe0"/><circle cx="10.5" cy="26.4" r="2.7" fill="#1f5fe0"/></svg>
<svg class="r" style="left:330px;top:584px" width="40" height="45" viewBox="0 0 40 45"><path d="M12.4 19.6 L12.4 12.2 C12.4 10.9 13.1 10.1 14.4 10.1 L26.2 10.1 Q31.5 10.1 31.5 15.4 L31.5 29.5 C31.5 30.8 30.8 31.5 29.5 31.5 L21.6 31.5" fill="none" stroke="#52c95a" stroke-width="2.6" stroke-linecap="round" stroke-linejoin="round"/><circle cx="12.2" cy="29.3" r="7.4" fill="#52c95a"/><path d="M8.6 29.6 L11 31.8 L15.6 26.8" fill="none" stroke="#fff" stroke-width="2" stroke-linecap="round" stroke-linejoin="round"/></svg>
<div class="t" style="left:377.70px;top:593.92px;font-size:27px;line-height:27px;color:#1c1c1c;font-weight:400;letter-spacing:0.268px;">SuccessTesting (1).c...</div>
<div class="t" style="right:1853.77px;top:593.92px;font-size:27px;line-height:27px;color:#1c1c1c;font-weight:400;letter-spacing:0.000px;transform:scaleX(1.0101);transform-origin:100% 0;">27</div>
<div class="t" style="right:1494.03px;top:593.92px;font-size:27px;line-height:27px;color:#1c1c1c;font-weight:400;letter-spacing:0.000px;transform:scaleX(1.2462);transform-origin:100% 0;">0</div>
<div class="t" style="left:1773.60px;top:593.92px;font-size:27px;line-height:27px;color:#1c1c1c;font-weight:400;letter-spacing:-0.249px;">15 Dec, 2025, 2:20 PM IST</div>
<div class="r" style="left:1414px;top:581px;width:175px;height:52px;background:#e4f7e6;border-radius:12px;"></div>
<svg class="r" style="left:1424px;top:584px" width="40" height="45" viewBox="0 0 40 45"><path d="M12.4 19.6 L12.4 12.2 C12.4 10.9 13.1 10.1 14.4 10.1 L26.2 10.1 Q31.5 10.1 31.5 15.4 L31.5 29.5 C31.5 30.8 30.8 31.5 29.5 31.5 L21.6 31.5" fill="none" stroke="#52c95a" stroke-width="2.6" stroke-linecap="round" stroke-linejoin="round"/><circle cx="12.2" cy="29.3" r="7.4" fill="#52c95a"/><path d="M8.6 29.6 L11 31.8 L15.6 26.8" fill="none" stroke="#fff" stroke-width="2" stroke-linecap="round" stroke-linejoin="round"/></svg>
<div class="t" style="left:1469.50px;top:593.92px;font-size:27px;line-height:27px;color:#1c1c1c;font-weight:400;letter-spacing:0.460px;">Success</div>
<div class="r" style="left:2134px;top:589px;width:36px;height:36px;border-radius:50%;background:#d9d9d9;"></div>
<div class="t" style="left:2139.60px;top:598.22px;font-size:17.5px;line-height:17.5px;color:#555555;font-weight:400;letter-spacing:1.362px;">DZ</div>
<div class="t" style="left:2184.00px;top:593.92px;font-size:27px;line-height:27px;color:#1c1c1c;font-weight:400;letter-spacing:0.108px;">Demo ZLURI</div>
<div class="r" style="left:2494px;top:578px;width:58px;height:58px;background:#e8eef9;border-radius:12px;"></div>
<svg class="r" style="left:2512px;top:590px" width="22" height="34" viewBox="0 0 22 34"><circle cx="10.5" cy="8.6" r="2.7" fill="#1f5fe0"/><circle cx="10.5" cy="17.5" r="2.7" fill="#1f5fe0"/><circle cx="10.5" cy="26.4" r="2.7" fill="#1f5fe0"/></svg>
<svg class="r" style="left:330px;top:656px" width="40" height="45" viewBox="0 0 40 45"><path d="M12.4 19.6 L12.4 12.2 C12.4 10.9 13.1 10.1 14.4 10.1 L26.2 10.1 Q31.5 10.1 31.5 15.4 L31.5 29.5 C31.5 30.8 30.8 31.5 29.5 31.5 L21.6 31.5" fill="none" stroke="#ff6450" stroke-width="2.6" stroke-linecap="round" stroke-linejoin="round"/><circle cx="12.2" cy="29.3" r="7.4" fill="#ff6450"/><path d="M9.4 26.5 L15 32.1 M15 26.5 L9.4 32.1" stroke="#fff" stroke-width="2" stroke-linecap="round"/></svg>
<div class="t" style="left:376.70px;top:665.92px;font-size:27px;line-height:27px;color:#1c1c1c;font-weight:400;letter-spacing:-0.004px;">10KUsers.csv</div>
<div class="t" style="right:1853.53px;top:665.92px;font-size:27px;line-height:27px;color:#1c1c1c;font-weight:400;letter-spacing:0.000px;transform:scaleX(1.2462);transform-origin:100% 0;">0</div>
<div class="t" style="right:1494.16px;top:665.92px;font-size:27px;line-height:27px;color:#1c1c1c;font-weight:400;letter-spacing:0.000px;transform:scaleX(1.1186);transform-origin:100% 0;">10,000</div>
<div class="t" style="left:1773.60px;top:665.92px;font-size:27px;line-height:27px;color:#1c1c1c;font-weight:400;letter-spacing:-0.349px;">12 Dec, 2025, 9:28 PM IST</div>
<div class="r" style="left:1414px;top:653px;width:145px;height:52px;background:#ffe8e5;border-radius:12px;"></div>
<svg class="r" style="left:1424px;top:656px" width="40" height="45" viewBox="0 0 40 45"><path d="M12.4 19.6 L12.4 12.2 C12.4 10.9 13.1 10.1 14.4 10.1 L26.2 10.1 Q31.5 10.1 31.5 15.4 L31.5 29.5 C31.5 30.8 30.8 31.5 29.5 31.5 L21.6 31.5" fill="none" stroke="#ff6450" stroke-width="2.6" stroke-linecap="round" stroke-linejoin="round"/><circle cx="12.2" cy="29.3" r="7.4" fill="#ff6450"/><path d="M9.4 26.5 L15 32.1 M15 26.5 L9.4 32.1" stroke="#fff" stroke-width="2" stroke-linecap="round"/></svg>
<div class="t" style="left:1468.50px;top:665.92px;font-size:27px;line-height:27px;color:#1c1c1c;font-weight:400;letter-spacing:0.416px;">Failed</div>
<div class="r" style="left:2134px;top:661px;width:36px;height:36px;border-radius:50%;background:#d9d9d9;"></div>
<div class="t" style="left:2139.60px;top:670.22px;font-size:17.5px;line-height:17.5px;color:#555555;font-weight:400;letter-spacing:1.362px;">DZ</div>
<div class="t" style="left:2184.00px;top:665.92px;font-size:27px;line-height:27px;color:#1c1c1c;font-weight:400;letter-spacing:0.108px;">Demo ZLURI</div>
<div class="r" style="left:2494px;top:650px;width:58px;height:58px;background:#e8eef9;border-radius:12px;"></div>
<svg class="r" style="left:2512px;top:662px" width="22" height="34" viewBox="0 0 22 34"><circle cx="10.5" cy="8.6" r="2.7" fill="#1f5fe0"/><circle cx="10.5" cy="17.5" r="2.7" fill="#1f5fe0"/><circle cx="10.5" cy="26.4" r="2.7" fill="#1f5fe0"/></svg>
<svg class="r" style="left:330px;top:728px" width="40" height="45" viewBox="0 0 40 45"><path d="M12.4 19.6 L12.4 12.2 C12.4 10.9 13.1 10.1 14.4 10.1 L26.2 10.1 Q31.5 10.1 31.5 15.4 L31.5 29.5 C31.5 30.8 30.8 31.5 29.5 31.5 L21.6 31.5" fill="none" stroke="#ff6450" stroke-width="2.6" stroke-linecap="round" stroke-linejoin="round"/><circle cx="12.2" cy="29.3" r="7.4" fill="#ff6450"/><path d="M9.4 26.5 L15 32.1 M15 26.5 L9.4 32.1" stroke="#fff" stroke-width="2" stroke-linecap="round"/></svg>
<div class="t" style="left:377.70px;top:737.92px;font-size:27px;line-height:27px;color:#1c1c1c;font-weight:400;letter-spacing:0.254px;">Csv_8_user_data_0...</div>
<div class="t" style="right:1853.53px;top:737.92px;font-size:27px;line-height:27px;color:#1c1c1c;font-weight:400;letter-spacing:0.000px;transform:scaleX(1.2462);transform-origin:100% 0;">0</div>
<div class="t" style="right:1494.39px;top:737.92px;font-size:27px;line-height:27px;color:#1c1c1c;font-weight:400;letter-spacing:0.000px;transform:scaleX(0.8958);transform-origin:100% 0;">13</div>
<div class="t" style="left:1773.60px;top:737.92px;font-size:27px;line-height:27px;color:#1c1c1c;font-weight:400;letter-spacing:-0.299px;">12 Dec, 2025, 7:30 PM IST</div>
<div class="r" style="left:1414px;top:725px;width:145px;height:52px;background:#ffe8e5;border-radius:12px;"></div>
<svg class="r" style="left:1424px;top:728px" width="40" height="45" viewBox="0 0 40 45"><path d="M12.4 19.6 L12.4 12.2 C12.4 10.9 13.1 10.1 14.4 10.1 L26.2 10.1 Q31.5 10.1 31.5 15.4 L31.5 29.5 C31.5 30.8 30.8 31.5 29.5 31.5 L21.6 31.5" fill="none" stroke="#ff6450" stroke-width="2.6" stroke-linecap="round" stroke-linejoin="round"/><circle cx="12.2" cy="29.3" r="7.4" fill="#ff6450"/><path d="M9.4 26.5 L15 32.1 M15 26.5 L9.4 32.1" stroke="#fff" stroke-width="2" stroke-linecap="round"/></svg>
<div class="t" style="left:1468.50px;top:737.92px;font-size:27px;line-height:27px;color:#1c1c1c;font-weight:400;letter-spacing:0.416px;">Failed</div>
<div class="r" style="left:2134px;top:733px;width:36px;height:36px;border-radius:50%;background:#d9d9d9;"></div>
<div class="t" style="left:2139.60px;top:742.22px;font-size:17.5px;line-height:17.5px;color:#555555;font-weight:400;letter-spacing:1.362px;">DZ</div>
<div class="t" style="left:2184.00px;top:737.92px;font-size:27px;line-height:27px;color:#1c1c1c;font-weight:400;letter-spacing:0.108px;">Demo ZLURI</div>
<div class="r" style="left:2494px;top:722px;width:58px;height:58px;background:#e8eef9;border-radius:12px;"></div>
<svg class="r" style="left:2512px;top:734px" width="22" height="34" viewBox="0 0 22 34"><circle cx="10.5" cy="8.6" r="2.7" fill="#1f5fe0"/><circle cx="10.5" cy="17.5" r="2.7" fill="#1f5fe0"/><circle cx="10.5" cy="26.4" r="2.7" fill="#1f5fe0"/></svg>
<svg class="r" style="left:330px;top:800px" width="40" height="45" viewBox="0 0 40 45"><path d="M12.4 19.6 L12.4 12.2 C12.4 10.9 13.1 10.1 14.4 10.1 L26.2 10.1 Q31.5 10.1 31.5 15.4 L31.5 29.5 C31.5 30.8 30.8 31.5 29.5 31.5 L21.6 31.5" fill="none" stroke="#ff6450" stroke-width="2.6" stroke-linecap="round" stroke-linejoin="round"/><circle cx="12.2" cy="29.3" r="7.4" fill="#ff6450"/><path d="M9.4 26.5 L15 32.1 M15 26.5 L9.4 32.1" stroke="#fff" stroke-width="2" stroke-linecap="round"/></svg>
<div class="t" style="left:376.70px;top:809.92px;font-size:27px;line-height:27px;color:#1c1c1c;font-weight:400;letter-spacing:-0.004px;">10KUsers.csv</div>
<div class="t" style="right:1853.53px;top:809.92px;font-size:27px;line-height:27px;color:#1c1c1c;font-weight:400;letter-spacing:0.000px;transform:scaleX(1.2462);transform-origin:100% 0;">0</div>
<div class="t" style="right:1494.16px;top:809.92px;font-size:27px;line-height:27px;color:#1c1c1c;font-weight:400;letter-spacing:0.000px;transform:scaleX(1.1186);transform-origin:100% 0;">10,000</div>
<div class="t" style="left:1773.60px;top:809.92px;font-size:27px;line-height:27px;color:#1c1c1c;font-weight:400;letter-spacing:-0.466px;">12 Dec, 2025, 7:27 PM IST</div>
<div class="r" style="left:1414px;top:797px;width:145px;height:52px;background:#ffe8e5;border-radius:12px;"></div>
<svg class="r" style="left:1424px;top:800px" width="40" height="45" viewBox="0 0 40 45"><path d="M12.4 19.6 L12.4 12.2 C12.4 10.9 13.1 10.1 14.4 10.1 L26.2 10.1 Q31.5 10.1 31.5 15.4 L31.5 29.5 C31.5 30.8 30.8 31.5 29.5 31.5 L21.6 31.5" fill="none" stroke="#ff6450" stroke-width="2.6" stroke-linecap="round" stroke-linejoin="round"/><circle cx="12.2" cy="29.3" r="7.4" fill="#ff6450"/><path d="M9.4 26.5 L15 32.1 M15 26.5 L9.4 32.1" stroke="#fff" stroke-width="2" stroke-linecap="round"/></svg>
<div class="t" style="left:1468.50px;top:809.92px;font-size:27px;line-height:27px;color:#1c1c1c;font-weight:400;letter-spacing:0.416px;">Failed</div>
<div class="r" style="left:2134px;top:805px;width:36px;height:36px;border-radius:50%;background:#d9d9d9;"></div>
<div class="t" style="left:2139.60px;top:814.22px;font-size:17.5px;line-height:17.5px;color:#555555;font-weight:400;letter-spacing:1.362px;">DZ</div>
<div class="t" style="left:2184.00px;top:809.92px;font-size:27px;line-height:27px;color:#1c1c1c;font-weight:400;letter-spacing:0.108px;">Demo ZLURI</div>
<div class="r" style="left:2494px;top:794px;width:58px;height:58px;background:#e8eef9;border-radius:12px;"></div>
<svg class="r" style="left:2512px;top:806px" width="22" height="34" viewBox="0 0 22 34"><circle cx="10.5" cy="8.6" r="2.7" fill="#1f5fe0"/><circle cx="10.5" cy="17.5" r="2.7" fill="#1f5fe0"/><circle cx="10.5" cy="26.4" r="2.7" fill="#1f5fe0"/></svg>
<svg class="r" style="left:330px;top:872px" width="40" height="45" viewBox="0 0 40 45"><path d="M12.4 19.6 L12.4 12.2 C12.4 10.9 13.1 10.1 14.4 10.1 L26.2 10.1 Q31.5 10.1 31.5 15.4 L31.5 29.5 C31.5 30.8 30.8 31.5 29.5 31.5 L21.6 31.5" fill="none" stroke="#ff6450" stroke-width="2.6" stroke-linecap="round" stroke-linejoin="round"/><circle cx="12.2" cy="29.3" r="7.4" fill="#ff6450"/><path d="M9.4 26.5 L15 32.1 M15 26.5 L9.4 32.1" stroke="#fff" stroke-width="2" stroke-linecap="round"/></svg>
<div class="t" style="left:377.70px;top:881.92px;font-size:27px;line-height:27px;color:#1c1c1c;font-weight:400;letter-spacing:0.254px;">Csv_8_user_data_0...</div>
<div class="t" style="right:1853.53px;top:881.92px;font-size:27px;line-height:27px;color:#1c1c1c;font-weight:400;letter-spacing:0.000px;transform:scaleX(1.2462);transform-origin:100% 0;">0</div>
<div class="t" style="right:1494.39px;top:881.92px;font-size:27px;line-height:27px;color:#1c1c1c;font-weight:400;letter-spacing:0.000px;transform:scaleX(0.8958);transform-origin:100% 0;">13</div>
<div class="t" style="left:1773.60px;top:881.92px;font-size:27px;line-height:27px;color:#1c1c1c;font-weight:400;letter-spacing:-0.466px;">12 Dec, 2025, 3:12 AM IST</div>
<div class="r" style="left:1414px;top:869px;width:145px;height:52px;background:#ffe8e5;border-radius:12px;"></div>
<svg class="r" style="left:1424px;top:872px" width="40" height="45" viewBox="0 0 40 45"><path d="M12.4 19.6 L12.4 12.2 C12.4 10.9 13.1 10.1 14.4 10.1 L26.2 10.1 Q31.5 10.1 31.5 15.4 L31.5 29.5 C31.5 30.8 30.8 31.5 29.5 31.5 L21.6 31.5" fill="none" stroke="#ff6450" stroke-width="2.6" stroke-linecap="round" stroke-linejoin="round"/><circle cx="12.2" cy="29.3" r="7.4" fill="#ff6450"/><path d="M9.4 26.5 L15 32.1 M15 26.5 L9.4 32.1" stroke="#fff" stroke-width="2" stroke-linecap="round"/></svg>
<div class="t" style="left:1468.50px;top:881.92px;font-size:27px;line-height:27px;color:#1c1c1c;font-weight:400;letter-spacing:0.416px;">Failed</div>
<div class="r" style="left:2134px;top:877px;width:36px;height:36px;border-radius:50%;background:#d9d9d9;"></div>
<div class="t" style="left:2139.60px;top:886.22px;font-size:17.5px;line-height:17.5px;color:#555555;font-weight:400;letter-spacing:1.362px;">DZ</div>
<div class="t" style="left:2184.00px;top:881.92px;font-size:27px;line-height:27px;color:#1c1c1c;font-weight:400;letter-spacing:0.108px;">Demo ZLURI</div>
<div class="r" style="left:2494px;top:866px;width:58px;height:58px;background:#e8eef9;border-radius:12px;"></div>
<svg class="r" style="left:2512px;top:878px" width="22" height="34" viewBox="0 0 22 34"><circle cx="10.5" cy="8.6" r="2.7" fill="#1f5fe0"/><circle cx="10.5" cy="17.5" r="2.7" fill="#1f5fe0"/><circle cx="10.5" cy="26.4" r="2.7" fill="#1f5fe0"/></svg>
<svg class="r" style="left:330px;top:944px" width="40" height="45" viewBox="0 0 40 45"><path d="M12.4 19.6 L12.4 12.2 C12.4 10.9 13.1 10.1 14.4 10.1 L26.2 10.1 Q31.5 10.1 31.5 15.4 L31.5 29.5 C31.5 30.8 30.8 31.5 29.5 31.5 L21.6 31.5" fill="none" stroke="#52c95a" stroke-width="2.6" stroke-linecap="round" stroke-linejoin="round"/><circle cx="12.2" cy="29.3" r="7.4" fill="#52c95a"/><path d="M8.6 29.6 L11 31.8 L15.6 26.8" fill="none" stroke="#fff" stroke-width="2" stroke-linecap="round" stroke-linejoin="round"/></svg>
<div class="t" style="left:377.70px;top:953.92px;font-size:27px;line-height:27px;color:#1c1c1c;font-weight:400;letter-spacing:0.268px;">SuccessTesting (1).c...</div>
<div class="t" style="right:1853.77px;top:953.92px;font-size:27px;line-height:27px;color:#1c1c1c;font-weight:400;letter-spacing:0.000px;transform:scaleX(1.0101);transform-origin:100% 0;">27</div>
<div class="t" style="right:1494.03px;top:953.92px;font-size:27px;line-height:27px;color:#1c1c1c;font-weight:400;letter-spacing:0.000px;transform:scaleX(1.2462);transform-origin:100% 0;">0</div>
<div class="t" style="left:1773.60px;top:953.92px;font-size:27px;line-height:27px;color:#1c1c1c;font-weight:400;letter-spacing:-0.332px;">11 Dec, 2025, 2:46 AM IST</div>
<div class="r" style="left:1414px;top:941px;width:175px;height:52px;background:#e4f7e6;border-radius:12px;"></div>
<svg class="r" style="left:1424px;top:944px" width="40" height="45" viewBox="0 0 40 45"><path d="M12.4 19.6 L12.4 12.2 C12.4 10.9 13.1 10.1 14.4 10.1 L26.2 10.1 Q31.5 10.1 31.5 15.4 L31.5 29.5 C31.5 30.8 30.8 31.5 29.5 31.5 L21.6 31.5" fill="none" stroke="#52c95a" stroke-width="2.6" stroke-linecap="round" stroke-linejoin="round"/><circle cx="12.2" cy="29.3" r="7.4" fill="#52c95a"/><path d="M8.6 29.6 L11 31.8 L15.6 26.8" fill="none" stroke="#fff" stroke-width="2" stroke-linecap="round" stroke-linejoin="round"/></svg>
<div class="t" style="left:1469.50px;top:953.92px;font-size:27px;line-height:27px;color:#1c1c1c;font-weight:400;letter-spacing:0.460px;">Success</div>
<div class="r" style="left:2134px;top:949px;width:36px;height:36px;border-radius:50%;background:#d9d9d9;"></div>
<div class="t" style="left:2139.60px;top:958.22px;font-size:17.5px;line-height:17.5px;color:#555555;font-weight:400;letter-spacing:1.362px;">DZ</div>
<div class="t" style="left:2184.00px;top:953.92px;font-size:27px;line-height:27px;color:#1c1c1c;font-weight:400;letter-spacing:0.108px;">Demo ZLURI</div>
<div class="r" style="left:2494px;top:938px;width:58px;height:58px;background:#e8eef9;border-radius:12px;"></div>
<svg class="r" style="left:2512px;top:950px" width="22" height="34" viewBox="0 0 22 34"><circle cx="10.5" cy="8.6" r="2.7" fill="#1f5fe0"/><circle cx="10.5" cy="17.5" r="2.7" fill="#1f5fe0"/><circle cx="10.5" cy="26.4" r="2.7" fill="#1f5fe0"/></svg>
<svg class="r" style="left:330px;top:1016px" width="40" height="45" viewBox="0 0 40 45"><path d="M12.4 19.6 L12.4 12.2 C12.4 10.9 13.1 10.1 14.4 10.1 L26.2 10.1 Q31.5 10.1 31.5 15.4 L31.5 29.5 C31.5 30.8 30.8 31.5 29.5 31.5 L21.6 31.5" fill="none" stroke="#ff6450" stroke-width="2.6" stroke-linecap="round" stroke-linejoin="round"/><circle cx="12.2" cy="29.3" r="7.4" fill="#ff6450"/><path d="M9.4 26.5 L15 32.1 M15 26.5 L9.4 32.1" stroke="#fff" stroke-width="2" stroke-linecap="round"/></svg>
<div class="t" style="left:376.70px;top:1025.92px;font-size:27px;line-height:27px;color:#1c1c1c;font-weight:400;letter-spacing:0.131px;">199Users.csv</div>
<div class="t" style="right:1853.53px;top:1025.92px;font-size:27px;line-height:27px;color:#1c1c1c;font-weight:400;letter-spacing:0.000px;transform:scaleX(1.2462);transform-origin:100% 0;">0</div>
<div class="t" style="right:1494.24px;top:1025.92px;font-size:27px;line-height:27px;color:#1c1c1c;font-weight:400;letter-spacing:0.000px;transform:scaleX(1.0468);transform-origin:100% 0;">199</div>
<div class="t" style="left:1773.60px;top:1025.92px;font-size:27px;line-height:27px;color:#1c1c1c;font-weight:400;letter-spacing:-0.299px;">11 Dec, 2025, 2:16 AM IST</div>
<div class="r" style="left:1414px;top:1013px;width:145px;height:52px;background:#ffe8e5;border-radius:12px;"></div>
<svg class="r" style="left:1424px;top:1016px" width="40" height="45" viewBox="0 0 40 45"><path d="M12.4 19.6 L12.4 12.2 C12.4 10.9 13.1 10.1 14.4 10.1 L26.2 10.1 Q31.5 10.1 31.5 15.4 L31.5 29.5 C31.5 30.8 30.8 31.5 29.5 31.5 L21.6 31.5" fill="none" stroke="#ff6450" stroke-width="2.6" stroke-linecap="round" stroke-linejoin="round"/><circle cx="12.2" cy="29.3" r="7.4" fill="#ff6450"/><path d="M9.4 26.5 L15 32.1 M15 26.5 L9.4 32.1" stroke="#fff" stroke-width="2" stroke-linecap="round"/></svg>
<div class="t" style="left:1468.50px;top:1025.92px;font-size:27px;line-height:27px;color:#1c1c1c;font-weight:400;letter-spacing:0.416px;">Failed</div>
<div class="r" style="left:2134px;top:1021px;width:36px;height:36px;border-radius:50%;background:#d9d9d9;"></div>
<div class="t" style="left:2139.60px;top:1030.22px;font-size:17.5px;line-height:17.5px;color:#555555;font-weight:400;letter-spacing:1.362px;">DZ</div>
<div class="t" style="left:2184.00px;top:1025.92px;font-size:27px;line-height:27px;color:#1c1c1c;font-weight:400;letter-spacing:0.108px;">Demo ZLURI</div>
<div class="r" style="left:2494px;top:1010px;width:58px;height:58px;background:#e8eef9;border-radius:12px;"></div>
<svg class="r" style="left:2512px;top:1022px" width="22" height="34" viewBox="0 0 22 34"><circle cx="10.5" cy="8.6" r="2.7" fill="#1f5fe0"/><circle cx="10.5" cy="17.5" r="2.7" fill="#1f5fe0"/><circle cx="10.5" cy="26.4" r="2.7" fill="#1f5fe0"/></svg>
<svg class="r" style="left:330px;top:1088px" width="40" height="45" viewBox="0 0 40 45"><path d="M12.4 19.6 L12.4 12.2 C12.4 10.9 13.1 10.1 14.4 10.1 L26.2 10.1 Q31.5 10.1 31.5 15.4 L31.5 29.5 C31.5 30.8 30.8 31.5 29.5 31.5 L21.6 31.5" fill="none" stroke="#ff9d12" stroke-width="2.6" stroke-linecap="round" stroke-linejoin="round"/><path d="M12 22.4 C12.3 22.4 12.6 22.6 12.8 23 L19.4 35.8 C19.6 36.4 19.3 36.9 18.7 36.9 L5.3 36.9 C4.7 36.9 4.4 36.4 4.6 35.8 L11.2 23 C11.4 22.6 11.7 22.4 12 22.4Z" fill="#ff9d12"/><line x1="12" y1="27.4" x2="12" y2="32" stroke="#fff" stroke-width="1.9" stroke-linecap="round"/><circle cx="12" cy="34.4" r="1.05" fill="#fff"/></svg>
<div class="t" style="left:376.70px;top:1097.92px;font-size:27px;line-height:27px;color:#1c1c1c;font-weight:400;letter-spacing:0.590px;">PartialSucessTestin...</div>
<div class="t" style="right:1853.77px;top:1097.92px;font-size:27px;line-height:27px;color:#1c1c1c;font-weight:400;letter-spacing:0.000px;transform:scaleX(1.0101);transform-origin:100% 0;">27</div>
<div class="t" style="right:1494.66px;top:1097.92px;font-size:27px;line-height:27px;color:#1c1c1c;font-weight:400;letter-spacing:0.000px;transform:scaleX(0.6333);transform-origin:100% 0;">1</div>
<div class="t" style="left:1773.60px;top:1097.92px;font-size:27px;line-height:27px;color:#1c1c1c;font-weight:400;letter-spacing:-0.299px;">11 Dec, 2025, 1:05 AM IST</div>
<div class="r" style="left:1414px;top:1085px;width:262px;height:52px;background:#fff5dc;border-radius:12px;"></div>
<svg class="r" style="left:1424px;top:1088px" width="40" height="45" viewBox="0 0 40 45"><path d="M12.4 19.6 L12.4 12.2 C12.4 10.9 13.1 10.1 14.4 10.1 L26.2 10.1 Q31.5 10.1 31.5 15.4 L31.5 29.5 C31.5 30.8 30.8 31.5 29.5 31.5 L21.6 31.5" fill="none" stroke="#ff9d12" stroke-width="2.6" stroke-linecap="round" stroke-linejoin="round"/><path d="M12 22.4 C12.3 22.4 12.6 22.6 12.8 23 L19.4 35.8 C19.6 36.4 19.3 36.9 18.7 36.9 L5.3 36.9 C4.7 36.9 4.4 36.4 4.6 35.8 L11.2 23 C11.4 22.6 11.7 22.4 12 22.4Z" fill="#ff9d12"/><line x1="12" y1="27.4" x2="12" y2="32" stroke="#fff" stroke-width="1.9" stroke-linecap="round"/><circle cx="12" cy="34.4" r="1.05" fill="#fff"/></svg>
<div class="t" style="left:1468.50px;top:1097.92px;font-size:27px;line-height:27px;color:#1c1c1c;font-weight:400;letter-spacing:0.423px;">Partial Success</div>
<div class="r" style="left:2134px;top:1093px;width:36px;height:36px;border-radius:50%;background:#d9d9d9;"></div>
<div class="t" style="left:2139.60px;top:1102.22px;font-size:17.5px;line-height:17.5px;color:#555555;font-weight:400;letter-spacing:1.362px;">DZ</div>
<div class="t" style="left:2184.00px;top:1097.92px;font-size:27px;line-height:27px;color:#1c1c1c;font-weight:400;letter-spacing:0.108px;">Demo ZLURI</div>
<div class="r" style="left:2494px;top:1082px;width:58px;height:58px;background:#e8eef9;border-radius:12px;"></div>
<svg class="r" style="left:2512px;top:1094px" width="22" height="34" viewBox="0 0 22 34"><circle cx="10.5" cy="8.6" r="2.7" fill="#1f5fe0"/><circle cx="10.5" cy="17.5" r="2.7" fill="#1f5fe0"/><circle cx="10.5" cy="26.4" r="2.7" fill="#1f5fe0"/></svg>
<svg class="r" style="left:330px;top:1160px" width="40" height="45" viewBox="0 0 40 45"><path d="M12.4 19.6 L12.4 12.2 C12.4 10.9 13.1 10.1 14.4 10.1 L26.2 10.1 Q31.5 10.1 31.5 15.4 L31.5 29.5 C31.5 30.8 30.8 31.5 29.5 31.5 L21.6 31.5" fill="none" stroke="#ff9d12" stroke-width="2.6" stroke-linecap="round" stroke-linejoin="round"/><path d="M12 22.4 C12.3 22.4 12.6 22.6 12.8 23 L19.4 35.8 C19.6 36.4 19.3 36.9 18.7 36.9 L5.3 36.9 C4.7 36.9 4.4 36.4 4.6 35.8 L11.2 23 C11.4 22.6 11.7 22.4 12 22.4Z" fill="#ff9d12"/><line x1="12" y1="27.4" x2="12" y2="32" stroke="#fff" stroke-width="1.9" stroke-linecap="round"/><circle cx="12" cy="34.4" r="1.05" fill="#fff"/></svg>
<div class="t" style="left:376.70px;top:1169.92px;font-size:27px;line-height:27px;color:#1c1c1c;font-weight:400;letter-spacing:0.473px;">Demo zluri acc_test ...</div>
<div class="t" style="right:1853.84px;top:1169.92px;font-size:27px;line-height:27px;color:#1c1c1c;font-weight:400;letter-spacing:0.000px;transform:scaleX(0.9476);transform-origin:100% 0;">16</div>
<div class="t" style="right:1494.17px;top:1169.92px;font-size:27px;line-height:27px;color:#1c1c1c;font-weight:400;letter-spacing:0.000px;transform:scaleX(1.1101);transform-origin:100% 0;">69</div>
<div class="t" style="left:1773.60px;top:1169.92px;font-size:27px;line-height:27px;color:#1c1c1c;font-weight:400;letter-spacing:-0.430px;">10 Dec, 2025, 12:35 PM I...</div>
<div class="r" style="left:1414px;top:1157px;width:262px;height:52px;background:#fff5dc;border-radius:12px;"></div>
<svg class="r" style="left:1424px;top:1160px" width="40" height="45" viewBox="0 0 40 45"><path d="M12.4 19.6 L12.4 12.2 C12.4 10.9 13.1 10.1 14.4 10.1 L26.2 10.1 Q31.5 10.1 31.5 15.4 L31.5 29.5 C31.5 30.8 30.8 31.5 29.5 31.5 L21.6 31.5" fill="none" stroke="#ff9d12" stroke-width="2.6" stroke-linecap="round" stroke-linejoin="round"/><path d="M12 22.4 C12.3 22.4 12.6 22.6 12.8 23 L19.4 35.8 C19.6 36.4 19.3 36.9 18.7 36.9 L5.3 36.9 C4.7 36.9 4.4 36.4 4.6 35.8 L11.2 23 C11.4 22.6 11.7 22.4 12 22.4Z" fill="#ff9d12"/><line x1="12" y1="27.4" x2="12" y2="32" stroke="#fff" stroke-width="1.9" stroke-linecap="round"/><circle cx="12" cy="34.4" r="1.05" fill="#fff"/></svg>
<div class="t" style="left:1468.50px;top:1169.92px;font-size:27px;line-height:27px;color:#1c1c1c;font-weight:400;letter-spacing:0.423px;">Partial Success</div>
<div class="r" style="left:2134px;top:1165px;width:36px;height:36px;border-radius:50%;background:#d9d9d9;"></div>
<div class="t" style="left:2139.60px;top:1174.22px;font-size:17.5px;line-height:17.5px;color:#555555;font-weight:400;letter-spacing:1.362px;">DZ</div>
<div class="t" style="left:2184.00px;top:1169.92px;font-size:27px;line-height:27px;color:#1c1c1c;font-weight:400;letter-spacing:0.108px;">Demo ZLURI</div>
<div class="r" style="left:2494px;top:1154px;width:58px;height:58px;background:#e8eef9;border-radius:12px;"></div>
<svg class="r" style="left:2512px;top:1166px" width="22" height="34" viewBox="0 0 22 34"><circle cx="10.5" cy="8.6" r="2.7" fill="#1f5fe0"/><circle cx="10.5" cy="17.5" r="2.7" fill="#1f5fe0"/><circle cx="10.5" cy="26.4" r="2.7" fill="#1f5fe0"/></svg>
<svg class="r" style="left:330px;top:1232px" width="40" height="45" viewBox="0 0 40 45"><path d="M12.4 19.6 L12.4 12.2 C12.4 10.9 13.1 10.1 14.4 10.1 L26.2 10.1 Q31.5 10.1 31.5 15.4 L31.5 29.5 C31.5 30.8 30.8 31.5 29.5 31.5 L21.6 31.5" fill="none" stroke="#ff9d12" stroke-width="2.6" stroke-linecap="round" stroke-linejoin="round"/><path d="M12 22.4 C12.3 22.4 12.6 22.6 12.8 23 L19.4 35.8 C19.6 36.4 19.3 36.9 18.7 36.9 L5.3 36.9 C4.7 36.9 4.4 36.4 4.6 35.8 L11.2 23 C11.4 22.6 11.7 22.4 12 22.4Z" fill="#ff9d12"/><line x1="12" y1="27.4" x2="12" y2="32" stroke="#fff" stroke-width="1.9" stroke-linecap="round"/><circle cx="12" cy="34.4" r="1.05" fill="#fff"/></svg>
<div class="t" style="left:376.70px;top:1241.92px;font-size:27px;line-height:27px;color:#1c1c1c;font-weight:400;letter-spacing:0.885px;">Desktop_agents_20...</div>
<div class="t" style="right:1853.75px;top:1241.92px;font-size:27px;line-height:27px;color:#1c1c1c;font-weight:400;letter-spacing:0.000px;transform:scaleX(1.0351);transform-origin:100% 0;">28</div>
<div class="t" style="right:1494.21px;top:1241.92px;font-size:27px;line-height:27px;color:#1c1c1c;font-weight:400;letter-spacing:0.000px;transform:scaleX(1.0706);transform-origin:100% 0;">100</div>
<div class="t" style="left:1774.60px;top:1241.92px;font-size:27px;line-height:27px;color:#1c1c1c;font-weight:400;letter-spacing:0.210px;">9 Dec, 2025, 4:32 PM IST</div>
<div class="r" style="left:1414px;top:1229px;width:262px;height:52px;background:#fff5dc;border-radius:12px;"></div>
<svg class="r" style="left:1424px;top:1232px" width="40" height="45" viewBox="0 0 40 45"><path d="M12.4 19.6 L12.4 12.2 C12.4 10.9 13.1 10.1 14.4 10.1 L26.2 10.1 Q31.5 10.1 31.5 15.4 L31.5 29.5 C31.5 30.8 30.8 31.5 29.5 31.5 L21.6 31.5" fill="none" stroke="#ff9d12" stroke-width="2.6" stroke-linecap="round" stroke-linejoin="round"/><path d="M12 22.4 C12.3 22.4 12.6 22.6 12.8 23 L19.4 35.8 C19.6 36.4 19.3 36.9 18.7 36.9 L5.3 36.9 C4.7 36.9 4.4 36.4 4.6 35.8 L11.2 23 C11.4 22.6 11.7 22.4 12 22.4Z" fill="#ff9d12"/><line x1="12" y1="27.4" x2="12" y2="32" stroke="#fff" stroke-width="1.9" stroke-linecap="round"/><circle cx="12" cy="34.4" r="1.05" fill="#fff"/></svg>
<div class="t" style="left:1468.50px;top:1241.92px;font-size:27px;line-height:27px;color:#1c1c1c;font-weight:400;letter-spacing:0.423px;">Partial Success</div>
<div class="r" style="left:2134px;top:1237px;width:36px;height:36px;border-radius:50%;background:#d9d9d9;"></div>
<div class="t" style="left:2139.60px;top:1246.22px;font-size:17.5px;line-height:17.5px;color:#555555;font-weight:400;letter-spacing:1.362px;">DZ</div>
<div class="t" style="left:2184.00px;top:1241.92px;font-size:27px;line-height:27px;color:#1c1c1c;font-weight:400;letter-spacing:0.108px;">Demo ZLURI</div>
<div class="r" style="left:2494px;top:1226px;width:58px;height:58px;background:#e8eef9;border-radius:12px;"></div>
<svg class="r" style="left:2512px;top:1238px" width="22" height="34" viewBox="0 0 22 34"><circle cx="10.5" cy="8.6" r="2.7" fill="#1f5fe0"/><circle cx="10.5" cy="17.5" r="2.7" fill="#1f5fe0"/><circle cx="10.5" cy="26.4" r="2.7" fill="#1f5fe0"/></svg>
<svg class="r" style="left:330px;top:1304px" width="40" height="45" viewBox="0 0 40 45"><path d="M12.4 19.6 L12.4 12.2 C12.4 10.9 13.1 10.1 14.4 10.1 L26.2 10.1 Q31.5 10.1 31.5 15.4 L31.5 29.5 C31.5 30.8 30.8 31.5 29.5 31.5 L21.6 31.5" fill="none" stroke="#ff9d12" stroke-width="2.6" stroke-linecap="round" stroke-linejoin="round"/><path d="M12 22.4 C12.3 22.4 12.6 22.6 12.8 23 L19.4 35.8 C19.6 36.4 19.3 36.9 18.7 36.9 L5.3 36.9 C4.7 36.9 4.4 36.4 4.6 35.8 L11.2 23 C11.4 22.6 11.7 22.4 12 22.4Z" fill="#ff9d12"/><line x1="12" y1="27.4" x2="12" y2="32" stroke="#fff" stroke-width="1.9" stroke-linecap="round"/><circle cx="12" cy="34.4" r="1.05" fill="#fff"/></svg>
<div class="t" style="left:376.70px;top:1313.92px;font-size:27px;line-height:27px;color:#1c1c1c;font-weight:400;letter-spacing:0.402px;">Emojis - SuccessTes...</div>
<div class="t" style="right:1853.92px;top:1313.92px;font-size:27px;line-height:27px;color:#1c1c1c;font-weight:400;letter-spacing:0.000px;transform:scaleX(0.8638);transform-origin:100% 0;">21</div>
<div class="t" style="right:1494.25px;top:1313.92px;font-size:27px;line-height:27px;color:#1c1c1c;font-weight:400;letter-spacing:0.000px;transform:scaleX(1.0287);transform-origin:100% 0;">1,059</div>
<div class="t" style="left:1774.60px;top:1313.92px;font-size:27px;line-height:27px;color:#1c1c1c;font-weight:400;letter-spacing:0.210px;">8 Dec, 2025, 7:25 PM IST</div>
<div class="r" style="left:1414px;top:1301px;width:262px;height:52px;background:#fff5dc;border-radius:12px;"></div>
<svg class="r" style="left:1424px;top:1304px" width="40" height="45" viewBox="0 0 40 45"><path d="M12.4 19.6 L12.4 12.2 C12.4 10.9 13.1 10.1 14.4 10.1 L26.2 10.1 Q31.5 10.1 31.5 15.4 L31.5 29.5 C31.5 30.8 30.8 31.5 29.5 31.5 L21.6 31.5" fill="none" stroke="#ff9d12" stroke-width="2.6" stroke-linecap="round" stroke-linejoin="round"/><path d="M12 22.4 C12.3 22.4 12.6 22.6 12.8 23 L19.4 35.8 C19.6 36.4 19.3 36.9 18.7 36.9 L5.3 36.9 C4.7 36.9 4.4 36.4 4.6 35.8 L11.2 23 C11.4 22.6 11.7 22.4 12 22.4Z" fill="#ff9d12"/><line x1="12" y1="27.4" x2="12" y2="32" stroke="#fff" stroke-width="1.9" stroke-linecap="round"/><circle cx="12" cy="34.4" r="1.05" fill="#fff"/></svg>
<div class="t" style="left:1468.50px;top:1313.92px;font-size:27px;line-height:27px;color:#1c1c1c;font-weight:400;letter-spacing:0.423px;">Partial Success</div>
<div class="r" style="left:2134px;top:1309px;width:36px;height:36px;border-radius:50%;background:#d9d9d9;"></div>
<div class="t" style="left:2139.60px;top:1318.22px;font-size:17.5px;line-height:17.5px;color:#555555;font-weight:400;letter-spacing:1.362px;">DZ</div>
<div class="t" style="left:2184.00px;top:1313.92px;font-size:27px;line-height:27px;color:#1c1c1c;font-weight:400;letter-spacing:0.108px;">Demo ZLURI</div>
<div class="r" style="left:2494px;top:1298px;width:58px;height:58px;background:#e8eef9;border-radius:12px;"></div>
<svg class="r" style="left:2512px;top:1310px" width="22" height="34" viewBox="0 0 22 34"><circle cx="10.5" cy="8.6" r="2.7" fill="#1f5fe0"/><circle cx="10.5" cy="17.5" r="2.7" fill="#1f5fe0"/><circle cx="10.5" cy="26.4" r="2.7" fill="#1f5fe0"/></svg>
<svg class="r" style="left:330px;top:1376px" width="40" height="45" viewBox="0 0 40 45"><path d="M12.4 19.6 L12.4 12.2 C12.4 10.9 13.1 10.1 14.4 10.1 L26.2 10.1 Q31.5 10.1 31.5 15.4 L31.5 29.5 C31.5 30.8 30.8 31.5 29.5 31.5 L21.6 31.5" fill="none" stroke="#ff9d12" stroke-width="2.6" stroke-linecap="round" stroke-linejoin="round"/><path d="M12 22.4 C12.3 22.4 12.6 22.6 12.8 23 L19.4 35.8 C19.6 36.4 19.3 36.9 18.7 36.9 L5.3 36.9 C4.7 36.9 4.4 36.4 4.6 35.8 L11.2 23 C11.4 22.6 11.7 22.4 12 22.4Z" fill="#ff9d12"/><line x1="12" y1="27.4" x2="12" y2="32" stroke="#fff" stroke-width="1.9" stroke-linecap="round"/><circle cx="12" cy="34.4" r="1.05" fill="#fff"/></svg>
<div class="t" style="left:376.70px;top:1385.92px;font-size:27px;line-height:27px;color:#1c1c1c;font-weight:400;letter-spacing:0.885px;">Desktop_agents_20...</div>
<div class="t" style="right:1853.77px;top:1385.92px;font-size:27px;line-height:27px;color:#1c1c1c;font-weight:400;letter-spacing:0.000px;transform:scaleX(1.0101);transform-origin:100% 0;">27</div>
<div class="t" style="right:1494.41px;top:1385.92px;font-size:27px;line-height:27px;color:#1c1c1c;font-weight:400;letter-spacing:0.000px;transform:scaleX(0.8803);transform-origin:100% 0;">101</div>
<div class="t" style="left:1774.60px;top:1385.92px;font-size:27px;line-height:27px;color:#1c1c1c;font-weight:400;letter-spacing:0.210px;">8 Dec, 2025, 1:42 PM IST</div>
<div class="r" style="left:1414px;top:1373px;width:262px;height:52px;background:#fff5dc;border-radius:12px;"></div>
<svg class="r" style="left:1424px;top:1376px" width="40" height="45" viewBox="0 0 40 45"><path d="M12.4 19.6 L12.4 12.2 C12.4 10.9 13.1 10.1 14.4 10.1 L26.2 10.1 Q31.5 10.1 31.5 15.4 L31.5 29.5 C31.5 30.8 30.8 31.5 29.5 31.5 L21.6 31.5" fill="none" stroke="#ff9d12" stroke-width="2.6" stroke-linecap="round" stroke-linejoin="round"/><path d="M12 22.4 C12.3 22.4 12.6 22.6 12.8 23 L19.4 35.8 C19.6 36.4 19.3 36.9 18.7 36.9 L5.3 36.9 C4.7 36.9 4.4 36.4 4.6 35.8 L11.2 23 C11.4 22.6 11.7 22.4 12 22.4Z" fill="#ff9d12"/><line x1="12" y1="27.4" x2="12" y2="32" stroke="#fff" stroke-width="1.9" stroke-linecap="round"/><circle cx="12" cy="34.4" r="1.05" fill="#fff"/></svg>
<div class="t" style="left:1468.50px;top:1385.92px;font-size:27px;line-height:27px;color:#1c1c1c;font-weight:400;letter-spacing:0.423px;">Partial Success</div>
<div class="r" style="left:2134px;top:1381px;width:36px;height:36px;border-radius:50%;background:#d9d9d9;"></div>
<div class="t" style="left:2139.60px;top:1390.22px;font-size:17.5px;line-height:17.5px;color:#555555;font-weight:400;letter-spacing:1.362px;">DZ</div>
<div class="t" style="left:2184.00px;top:1385.92px;font-size:27px;line-height:27px;color:#1c1c1c;font-weight:400;letter-spacing:0.108px;">Demo ZLURI</div>
<div class="r" style="left:2494px;top:1370px;width:58px;height:58px;background:#e8eef9;border-radius:12px;"></div>
<svg class="r" style="left:2512px;top:1382px" width="22" height="34" viewBox="0 0 22 34"><circle cx="10.5" cy="8.6" r="2.7" fill="#1f5fe0"/><circle cx="10.5" cy="17.5" r="2.7" fill="#1f5fe0"/><circle cx="10.5" cy="26.4" r="2.7" fill="#1f5fe0"/></svg>
<svg class="r" style="left:330px;top:1448px" width="40" height="45" viewBox="0 0 40 45"><path d="M12.4 19.6 L12.4 12.2 C12.4 10.9 13.1 10.1 14.4 10.1 L26.2 10.1 Q31.5 10.1 31.5 15.4 L31.5 29.5 C31.5 30.8 30.8 31.5 29.5 31.5 L21.6 31.5" fill="none" stroke="#ff9d12" stroke-width="2.6" stroke-linecap="round" stroke-linejoin="round"/><path d="M12 22.4 C12.3 22.4 12.6 22.6 12.8 23 L19.4 35.8 C19.6 36.4 19.3 36.9 18.7 36.9 L5.3 36.9 C4.7 36.9 4.4 36.4 4.6 35.8 L11.2 23 C11.4 22.6 11.7 22.4 12 22.4Z" fill="#ff9d12"/><line x1="12" y1="27.4" x2="12" y2="32" stroke="#fff" stroke-width="1.9" stroke-linecap="round"/><circle cx="12" cy="34.4" r="1.05" fill="#fff"/></svg>
<div class="t" style="left:377.70px;top:1457.92px;font-size:27px;line-height:27px;color:#1c1c1c;font-weight:400;letter-spacing:0.729px;">SuccessTesting100...</div>
<div class="t" style="right:1853.77px;top:1457.92px;font-size:27px;line-height:27px;color:#1c1c1c;font-weight:400;letter-spacing:0.000px;transform:scaleX(1.0101);transform-origin:100% 0;">27</div>
<div class="t" style="right:1494.27px;top:1457.92px;font-size:27px;line-height:27px;color:#1c1c1c;font-weight:400;letter-spacing:0.000px;transform:scaleX(1.0178);transform-origin:100% 0;">1,053</div>
<div class="t" style="left:1774.60px;top:1457.92px;font-size:27px;line-height:27px;color:#1c1c1c;font-weight:400;letter-spacing:-0.424px;">5 Dec, 2025, 12:10 PM IST</div>
<div class="r" style="left:1414px;top:1445px;width:262px;height:52px;background:#fff5dc;border-radius:12px;"></div>
<svg class="r" style="left:1424px;top:1448px" width="40" height="45" viewBox="0 0 40 45"><path d="M12.4 19.6 L12.4 12.2 C12.4 10.9 13.1 10.1 14.4 10.1 L26.2 10.1 Q31.5 10.1 31.5 15.4 L31.5 29.5 C31.5 30.8 30.8 31.5 29.5 31.5 L21.6 31.5" fill="none" stroke="#ff9d12" stroke-width="2.6" stroke-linecap="round" stroke-linejoin="round"/><path d="M12 22.4 C12.3 22.4 12.6 22.6 12.8 23 L19.4 35.8 C19.6 36.4 19.3 36.9 18.7 36.9 L5.3 36.9 C4.7 36.9 4.4 36.4 4.6 35.8 L11.2 23 C11.4 22.6 11.7 22.4 12 22.4Z" fill="#ff9d12"/><line x1="12" y1="27.4" x2="12" y2="32" stroke="#fff" stroke-width="1.9" stroke-linecap="round"/><circle cx="12" cy="34.4" r="1.05" fill="#fff"/></svg>
<div class="t" style="left:1468.50px;top:1457.92px;font-size:27px;line-height:27px;color:#1c1c1c;font-weight:400;letter-spacing:0.423px;">Partial Success</div>
<div class="r" style="left:2134px;top:1453px;width:36px;height:36px;border-radius:50%;background:#d9d9d9;"></div>
<div class="t" style="left:2139.60px;top:1462.22px;font-size:17.5px;line-height:17.5px;color:#555555;font-weight:400;letter-spacing:1.362px;">DZ</div>
<div class="t" style="left:2184.00px;top:1457.92px;font-size:27px;line-height:27px;color:#1c1c1c;font-weight:400;letter-spacing:0.108px;">Demo ZLURI</div>
<div class="r" style="left:2494px;top:1442px;width:58px;height:58px;background:#e8eef9;border-radius:12px;"></div>
<svg class="r" style="left:2512px;top:1454px" width="22" height="34" viewBox="0 0 22 34"><circle cx="10.5" cy="8.6" r="2.7" fill="#1f5fe0"/><circle cx="10.5" cy="17.5" r="2.7" fill="#1f5fe0"/><circle cx="10.5" cy="26.4" r="2.7" fill="#1f5fe0"/></svg>
<svg class="r" style="left:330px;top:1520px" width="40" height="45" viewBox="0 0 40 45"><path d="M12.4 19.6 L12.4 12.2 C12.4 10.9 13.1 10.1 14.4 10.1 L26.2 10.1 Q31.5 10.1 31.5 15.4 L31.5 29.5 C31.5 30.8 30.8 31.5 29.5 31.5 L21.6 31.5" fill="none" stroke="#ff9d12" stroke-width="2.6" stroke-linecap="round" stroke-linejoin="round"/><path d="M12 22.4 C12.3 22.4 12.6 22.6 12.8 23 L19.4 35.8 C19.6 36.4 19.3 36.9 18.7 36.9 L5.3 36.9 C4.7 36.9 4.4 36.4 4.6 35.8 L11.2 23 C11.4 22.6 11.7 22.4 12 22.4Z" fill="#ff9d12"/><line x1="12" y1="27.4" x2="12" y2="32" stroke="#fff" stroke-width="1.9" stroke-linecap="round"/><circle cx="12" cy="34.4" r="1.05" fill="#fff"/></svg>
<div class="t" style="left:377.70px;top:1529.92px;font-size:27px;line-height:27px;color:#1c1c1c;font-weight:400;letter-spacing:0.729px;">SuccessTesting100...</div>
<div class="t" style="right:1853.77px;top:1529.92px;font-size:27px;line-height:27px;color:#1c1c1c;font-weight:400;letter-spacing:0.000px;transform:scaleX(1.0101);transform-origin:100% 0;">27</div>
<div class="t" style="right:1494.27px;top:1529.92px;font-size:27px;line-height:27px;color:#1c1c1c;font-weight:400;letter-spacing:0.000px;transform:scaleX(1.0178);transform-origin:100% 0;">1,053</div>
<div class="t" style="left:1775.60px;top:1529.92px;font-size:27px;line-height:27px;color:#1c1c1c;font-weight:400;letter-spacing:0.167px;">4 Dec, 2025, 8:19 PM IST</div>
<div class="r" style="left:1414px;top:1517px;width:262px;height:52px;background:#fff5dc;border-radius:12px;"></div>
<svg class="r" style="left:1424px;top:1520px" width="40" height="45" viewBox="0 0 40 45"><path d="M12.4 19.6 L12.4 12.2 C12.4 10.9 13.1 10.1 14.4 10.1 L26.2 10.1 Q31.5 10.1 31.5 15.4 L31.5 29.5 C31.5 30.8 30.8 31.5 29.5 31.5 L21.6 31.5" fill="none" stroke="#ff9d12" stroke-width="2.6" stroke-linecap="round" stroke-linejoin="round"/><path d="M12 22.4 C12.3 22.4 12.6 22.6 12.8 23 L19.4 35.8 C19.6 36.4 19.3 36.9 18.7 36.9 L5.3 36.9 C4.7 36.9 4.4 36.4 4.6 35.8 L11.2 23 C11.4 22.6 11.7 22.4 12 22.4Z" fill="#ff9d12"/><line x1="12" y1="27.4" x2="12" y2="32" stroke="#fff" stroke-width="1.9" stroke-linecap="round"/><circle cx="12" cy="34.4" r="1.05" fill="#fff"/></svg>
<div class="t" style="left:1468.50px;top:1529.92px;font-size:27px;line-height:27px;color:#1c1c1c;font-weight:400;letter-spacing:0.423px;">Partial Success</div>
<div class="r" style="left:2134px;top:1525px;width:36px;height:36px;border-radius:50%;background:#d9d9d9;"></div>
<div class="t" style="left:2139.60px;top:1534.22px;font-size:17.5px;line-height:17.5px;color:#555555;font-weight:400;letter-spacing:1.362px;">DZ</div>
<div class="t" style="left:2184.00px;top:1529.92px;font-size:27px;line-height:27px;color:#1c1c1c;font-weight:400;letter-spacing:0.108px;">Demo ZLURI</div>
<div class="r" style="left:2494px;top:1514px;width:58px;height:58px;background:#e8eef9;border-radius:12px;"></div>
<svg class="r" style="left:2512px;top:1526px" width="22" height="34" viewBox="0 0 22 34"><circle cx="10.5" cy="8.6" r="2.7" fill="#1f5fe0"/><circle cx="10.5" cy="17.5" r="2.7" fill="#1f5fe0"/><circle cx="10.5" cy="26.4" r="2.7" fill="#1f5fe0"/></svg>
<div class="r" style="left:1414px;top:1589px;width:262px;height:52px;background:#fff5dc;border-radius:12px;"></div>
<svg class="r" style="left:1424px;top:1592px" width="40" height="45" viewBox="0 0 40 45"><path d="M12.4 19.6 L12.4 12.2 C12.4 10.9 13.1 10.1 14.4 10.1 L26.2 10.1 Q31.5 10.1 31.5 15.4 L31.5 29.5 C31.5 30.8 30.8 31.5 29.5 31.5 L21.6 31.5" fill="none" stroke="#ff9d12" stroke-width="2.6" stroke-linecap="round" stroke-linejoin="round"/><path d="M12 22.4 C12.3 22.4 12.6 22.6 12.8 23 L19.4 35.8 C19.6 36.4 19.3 36.9 18.7 36.9 L5.3 36.9 C4.7 36.9 4.4 36.4 4.6 35.8 L11.2 23 C11.4 22.6 11.7 22.4 12 22.4Z" fill="#ff9d12"/><line x1="12" y1="27.4" x2="12" y2="32" stroke="#fff" stroke-width="1.9" stroke-linecap="round"/><circle cx="12" cy="34.4" r="1.05" fill="#fff"/></svg>
<div class="r" style="left:2134px;top:1597px;width:36px;height:36px;border-radius:50%;background:#d9d9d9;"></div>
<div class="r" style="left:2494px;top:1586px;width:58px;height:58px;background:#e8eef9;border-radius:12px;"></div>
<svg class="r" style="left:2512px;top:1598px" width="22" height="34" viewBox="0 0 22 34"><circle cx="10.5" cy="8.6" r="2.7" fill="#1f5fe0"/><circle cx="10.5" cy="17.5" r="2.7" fill="#1f5fe0"/><circle cx="10.5" cy="26.4" r="2.7" fill="#1f5fe0"/></svg>
</div>
<div class="r" style="left:1393px;top:351px;width:366px;height:1238px;box-sizing:border-box;border:6px solid #ff0000;border-radius:3px;"></div>
<svg class="r" style="left:1650px;top:430px" width="120" height="200" viewBox="0 0 120 200"><path d="M16 24 L52 12 L52 36Z" fill="#ff0000"/><line x1="50" y1="24" x2="100" y2="24" stroke="#ff0000" stroke-width="5" stroke-linecap="round"/><path d="M29 107.5 L64 95.5 L64 119Z" fill="#fff200"/><line x1="62" y1="108" x2="100" y2="106.5" stroke="#fff200" stroke-width="6" stroke-linecap="round"/><path d="M29 182 L64 170 L64 194Z" fill="#00f020"/><line x1="62" y1="182" x2="104" y2="182" stroke="#00f020" stroke-width="6" stroke-linecap="round"/></svg>
</body></html>
